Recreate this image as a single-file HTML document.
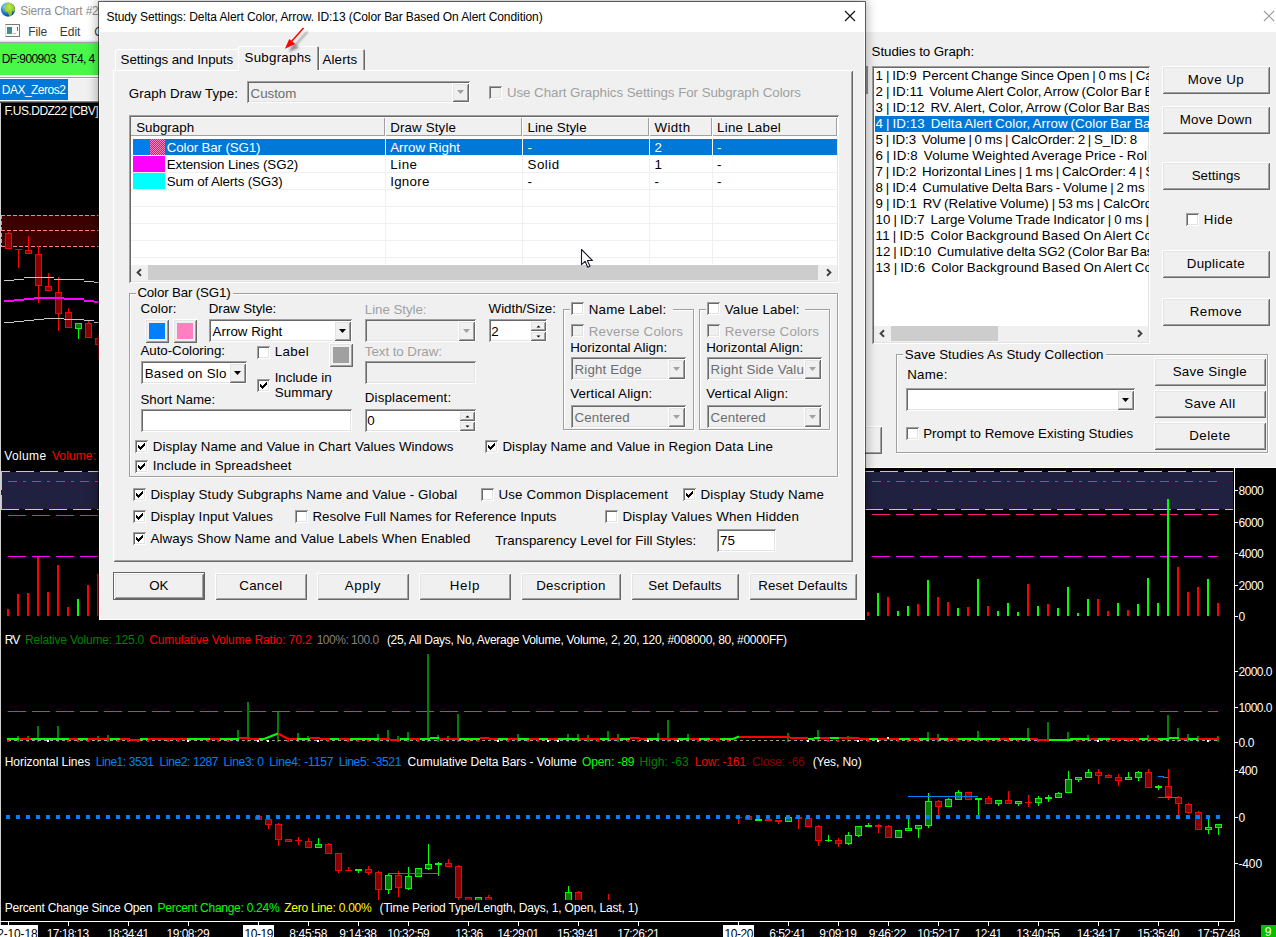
<!DOCTYPE html><html><head><meta charset="utf-8"><title>Study Settings</title><style>
html,body{margin:0;padding:0}
body{width:1276px;height:937px;overflow:hidden;position:relative;background:#000;font-family:"Liberation Sans",sans-serif}
div,span.t,svg.a{position:absolute;box-sizing:border-box}
span.t{white-space:pre;display:block}
svg{display:block}

</style></head><body>
<div style="left:0px;top:0px;width:1276px;height:43px;background:#fff;"></div>
<svg class="a" style="left:0;top:1px" width="17" height="18" viewBox="0 0 17 18"><defs><radialGradient id="gl" cx="0.35" cy="0.3" r="0.75"><stop offset="0" stop-color="#9fe0ff"/><stop offset="0.45" stop-color="#2f8fe0"/><stop offset="1" stop-color="#0a3f8f"/></radialGradient><radialGradient id="gg" cx="0.45" cy="0.3" r="0.8"><stop offset="0" stop-color="#c4e84a"/><stop offset="0.7" stop-color="#86c020"/><stop offset="1" stop-color="#5a9a18"/></radialGradient><clipPath id="gc"><circle cx="8" cy="8.6" r="7"/></clipPath></defs><circle cx="8" cy="8.6" r="7.1" fill="url(#gl)"/><g clip-path="url(#gc)"><path d="M5.5 3.2C7 1.6 10.5 1.2 13 3 15.5 5 16 8 14.5 10.2 13.6 11 12.8 10 11.8 10.6 12.6 12.4 11.4 14.8 9.6 15.6 8.6 14.6 8.8 12.8 8 11.6 6.6 11.4 4.6 10.6 4.2 8.8 4 7.2 5.6 6.6 5.2 5.2 5 4.4 5.2 3.8 5.5 3.2z" fill="url(#gg)"/></g></svg>
<span class="t" style="left:20.2px;top:1px;font-size:12px;line-height:20px;color:#8e8e8e;letter-spacing:-0.198px;">Sierra Chart #2</span>
<div style="left:5px;top:24px;width:15px;height:13px;background:#fafafa;border:1px solid #7a7a7a;border-left-color:#ddd;border-radius:1px;"></div>
<div style="left:7px;top:27px;width:5px;height:7px;background:linear-gradient(#3a7fb5,#3fa06a);"></div>
<div style="left:17px;top:27px;width:1px;height:4px;background:linear-gradient(#2a60c0,#40b040);"></div>
<div style="left:13px;top:33px;width:3px;height:1px;background:#bbb;"></div>
<span class="t" style="left:28.2px;top:22px;font-size:12px;line-height:20px;color:#3c3c3c;letter-spacing:-0.109px;">File</span>
<span class="t" style="left:59.8px;top:22px;font-size:12px;line-height:20px;color:#3c3c3c;letter-spacing:-0.020px;">Edit</span>
<span class="t" style="left:94.2px;top:22px;font-size:12px;line-height:20px;color:#3c3c3c;">C</span>
<div style="left:0px;top:40px;width:1276px;height:1px;background:#f4f4f4;"></div>
<div style="left:0px;top:41px;width:1276px;height:1px;background:#e0e0e0;"></div>
<div style="left:0px;top:42px;width:1276px;height:1px;background:#a8a0a8;"></div>
<div style="left:0px;top:43px;width:1276px;height:32px;background:#4af84a;"></div>
<span class="t" style="left:1.8px;top:49px;font-size:12px;line-height:20px;color:#000;letter-spacing:-0.589px;">DF:900903  ST:4, 4</span>
<div style="left:0px;top:75px;width:1276px;height:2px;background:#fff;"></div>
<div style="left:0px;top:77px;width:1276px;height:1px;background:#a0a0a0;"></div>
<div style="left:0px;top:78px;width:1276px;height:1px;background:#fff;"></div>
<div style="left:0px;top:79px;width:1276px;height:22px;background:#f0f0f0;"></div>
<div style="left:0px;top:79px;width:68px;height:21px;background:#0078d7;"></div>
<span class="t" style="left:1.8px;top:80px;font-size:12px;line-height:20px;color:#fff;letter-spacing:-0.520px;">DAX_Zeros2</span>
<div style="left:0px;top:100px;width:1276px;height:1px;background:#fff;"></div>
<div style="left:0px;top:101px;width:1276px;height:1px;background:#8a8a8a;"></div>
<div style="left:0px;top:102px;width:1276px;height:1px;background:#3c3c3c;"></div>
<div style="left:0px;top:103px;width:1px;height:834px;background:#d0d0d0;"></div>
<svg class="a" style="left:0;top:0" width="1276" height="937" viewBox="0 0 1276 937" shape-rendering="crispEdges"><rect x="1" y="215" width="98" height="31" fill="#3d0000"/><path d="M1 215.5H99" stroke="#ff8080" stroke-width="1" stroke-dasharray="4 2"/><path d="M1 230.5H99" stroke="#ff8080" stroke-width="1" stroke-dasharray="4 2"/><path d="M1 246.5H99" stroke="#ff8080" stroke-width="1" stroke-dasharray="4 2"/><path d="M1.5 215V247" stroke="#ff8080" stroke-width="1" stroke-dasharray="4 2"/><path d="M8.5 232.0V249.0" stroke="#ff0000" stroke-width="1"/><rect x="5.5" y="233.5" width="6" height="15" fill="#8b0000" stroke="#ff0000" stroke-width="1"/><path d="M18.5 249V268" stroke="#ff0000" stroke-width="1"/><path d="M15 249.5H22" stroke="#ff0000" stroke-width="1"/><path d="M28.5 236.0V254.0" stroke="#ff0000" stroke-width="1"/><rect x="25.5" y="250.5" width="6" height="3" fill="#8b0000" stroke="#ff0000" stroke-width="1"/><path d="M38.5 246.0V303.0" stroke="#ff0000" stroke-width="1"/><rect x="35.5" y="254.5" width="6" height="31" fill="#8b0000" stroke="#ff0000" stroke-width="1"/><path d="M48.5 273.0V291.0" stroke="#ff0000" stroke-width="1"/><rect x="45.5" y="286.5" width="6" height="4" fill="#8b0000" stroke="#ff0000" stroke-width="1"/><path d="M58.5 277.0V331.0" stroke="#ff0000" stroke-width="1"/><rect x="55.5" y="292.5" width="6" height="21" fill="#8b0000" stroke="#ff0000" stroke-width="1"/><path d="M68.5 308.0V328.0" stroke="#ff0000" stroke-width="1"/><rect x="65.5" y="312.5" width="6" height="15" fill="#8b0000" stroke="#ff0000" stroke-width="1"/><path d="M78.5 323.0V339.0" stroke="#00ff00" stroke-width="1"/><rect x="75.5" y="323.5" width="6" height="5" fill="#008000" stroke="#00ff00" stroke-width="1"/><path d="M88.5 321.0V338.0" stroke="#ff0000" stroke-width="1"/><rect x="85.5" y="323.5" width="6" height="14" fill="#8b0000" stroke="#ff0000" stroke-width="1"/><path d="M98.5 335.0V360.0" stroke="#ff0000" stroke-width="1"/><rect x="95.5" y="338.5" width="6" height="6" fill="#8b0000" stroke="#ff0000" stroke-width="1"/><path d="M4 280.5H14M14 279.5H24M24 277.5H54M54 279.5H84M84 281.5H94M94 282.5H99" stroke="#c8c8c8" stroke-width="1" fill="none"/><path d="M4 322.5H14M14 321.5H24M24 320.5H34M34 319.5H44M44 318.5H64M64 319.5H84M84 320.5H94M94 322.5H99" stroke="#c8c8c8" stroke-width="1" fill="none"/><path d="M4 301H14M14 300H24M24 299H34M34 298.3H64M64 299.3H84M84 300.5H94M94 302H99" stroke="#ff00ff" stroke-width="2" fill="none"/><rect x="1" y="472" width="1232" height="37" fill="#202040"/><path d="M-8 471.5H1233" stroke="#e0e000" stroke-width="1" stroke-dasharray="18 6"/><path d="M1 509.5H1233" stroke="#e0e000" stroke-width="1" stroke-dasharray="18 6"/><path d="M1.5 471V490M1.5 495V510" stroke="#e0e000" stroke-width="1"/><path d="M8 481.5H1217" stroke="#ff1493" stroke-width="1" stroke-dasharray="9 6 3 6"/><path d="M8 515.5H600" stroke="#ff1493" stroke-width="1" stroke-dasharray="18 6"/><path d="M608 514.5H1218" stroke="#ff1493" stroke-width="1" stroke-dasharray="18 6"/><path d="M8 556.5H1218" stroke="#ff00ff" stroke-width="1" stroke-dasharray="18 6"/><rect x="7" y="609" width="2" height="7" fill="#ff0000"/><rect x="17" y="594" width="2" height="22" fill="#ff0000"/><rect x="27" y="593" width="2" height="23" fill="#ff0000"/><rect x="37" y="557" width="2" height="59" fill="#ff0000"/><rect x="47" y="592" width="2" height="24" fill="#ff0000"/><rect x="57" y="565" width="2" height="51" fill="#ff0000"/><rect x="67" y="607" width="2" height="9" fill="#ff0000"/><rect x="77" y="599" width="2" height="17" fill="#00ff00"/><rect x="87" y="585" width="2" height="31" fill="#ff0000"/><rect x="97" y="574" width="2" height="42" fill="#ff0000"/><rect x="867" y="612" width="2" height="4" fill="#ff0000"/><rect x="877" y="593" width="2" height="23" fill="#00ff00"/><rect x="887" y="597" width="2" height="19" fill="#ff0000"/><rect x="897" y="611" width="2" height="5" fill="#00ff00"/><rect x="907" y="606" width="2" height="10" fill="#00ff00"/><rect x="917" y="604" width="2" height="12" fill="#ff0000"/><rect x="927" y="580" width="2" height="36" fill="#00ff00"/><rect x="937" y="597" width="2" height="19" fill="#ff0000"/><rect x="947" y="602" width="2" height="14" fill="#ff0000"/><rect x="957" y="608" width="2" height="8" fill="#00ff00"/><rect x="967" y="607" width="2" height="9" fill="#ff0000"/><rect x="977" y="579" width="2" height="37" fill="#00ff00"/><rect x="987" y="606" width="2" height="10" fill="#ff0000"/><rect x="997" y="611" width="2" height="5" fill="#00ff00"/><rect x="1007" y="603" width="2" height="13" fill="#00ff00"/><rect x="1017" y="612" width="2" height="4" fill="#00ff00"/><rect x="1027" y="584" width="2" height="32" fill="#ff0000"/><rect x="1037" y="606" width="2" height="10" fill="#00ff00"/><rect x="1047" y="604" width="2" height="12" fill="#ff0000"/><rect x="1057" y="608" width="2" height="8" fill="#00ff00"/><rect x="1067" y="587" width="2" height="29" fill="#00ff00"/><rect x="1077" y="613" width="2" height="3" fill="#00ff00"/><rect x="1087" y="599" width="2" height="17" fill="#00ff00"/><rect x="1097" y="599" width="2" height="17" fill="#ff0000"/><rect x="1107" y="611" width="2" height="5" fill="#ff0000"/><rect x="1117" y="603" width="2" height="13" fill="#00ff00"/><rect x="1127" y="610" width="2" height="6" fill="#ff0000"/><rect x="1137" y="604" width="2" height="12" fill="#00ff00"/><rect x="1147" y="578" width="2" height="38" fill="#00ff00"/><rect x="1157" y="603" width="2" height="13" fill="#00ff00"/><rect x="1167" y="499" width="2" height="117" fill="#00ff00"/><rect x="1177" y="567" width="2" height="49" fill="#ff0000"/><rect x="1187" y="592" width="2" height="24" fill="#ff0000"/><rect x="1197" y="587" width="2" height="29" fill="#ff0000"/><rect x="1207" y="579" width="2" height="37" fill="#00ff00"/><rect x="1217" y="603" width="2" height="13" fill="#ff0000"/><path d="M8 711.5H1218" stroke="#ff00ff" stroke-width="1" stroke-dasharray="18 6"/><rect x="17" y="736" width="2" height="6" fill="#008000"/><rect x="27" y="736" width="2" height="6" fill="#008000"/><rect x="37" y="726" width="2" height="16" fill="#008000"/><rect x="57" y="726" width="2" height="16" fill="#008000"/><rect x="97" y="736" width="2" height="6" fill="#008000"/><rect x="107" y="735" width="2" height="7" fill="#008000"/><rect x="237" y="730" width="2" height="12" fill="#008000"/><rect x="247" y="702" width="2" height="40" fill="#008000"/><rect x="277" y="712" width="2" height="30" fill="#008000"/><rect x="297" y="733" width="2" height="9" fill="#008000"/><rect x="307" y="736" width="2" height="6" fill="#008000"/><rect x="377" y="734" width="2" height="8" fill="#008000"/><rect x="387" y="730" width="2" height="12" fill="#008000"/><rect x="397" y="736" width="2" height="6" fill="#008000"/><rect x="407" y="732" width="2" height="10" fill="#008000"/><rect x="427" y="654" width="2" height="88" fill="#008000"/><rect x="437" y="735" width="2" height="7" fill="#008000"/><rect x="447" y="736" width="2" height="6" fill="#008000"/><rect x="457" y="714" width="2" height="28" fill="#008000"/><rect x="517" y="734" width="2" height="8" fill="#008000"/><rect x="567" y="734" width="2" height="8" fill="#008000"/><rect x="577" y="734" width="2" height="8" fill="#008000"/><rect x="587" y="735" width="2" height="7" fill="#008000"/><rect x="607" y="731" width="2" height="11" fill="#008000"/><rect x="617" y="734" width="2" height="8" fill="#008000"/><rect x="657" y="733" width="2" height="9" fill="#008000"/><rect x="667" y="720" width="2" height="22" fill="#008000"/><rect x="687" y="734" width="2" height="8" fill="#008000"/><rect x="787" y="733" width="2" height="9" fill="#008000"/><rect x="817" y="730" width="2" height="12" fill="#008000"/><rect x="847" y="736" width="2" height="6" fill="#008000"/><rect x="927" y="732" width="2" height="10" fill="#008000"/><rect x="937" y="734" width="2" height="8" fill="#008000"/><rect x="977" y="731" width="2" height="11" fill="#008000"/><rect x="1027" y="728" width="2" height="14" fill="#008000"/><rect x="1047" y="722" width="2" height="20" fill="#008000"/><rect x="1067" y="732" width="2" height="10" fill="#008000"/><rect x="1087" y="735" width="2" height="7" fill="#008000"/><rect x="1147" y="735" width="2" height="7" fill="#008000"/><rect x="1167" y="715" width="2" height="27" fill="#008000"/><rect x="1177" y="728" width="2" height="14" fill="#008000"/><rect x="1187" y="734" width="2" height="8" fill="#008000"/><rect x="1197" y="736" width="2" height="6" fill="#008000"/><rect x="1217" y="736" width="2" height="6" fill="#008000"/><path d="M8 740.5H1219" stroke="#a0a0a0" stroke-width="1" stroke-dasharray="3 3"/><rect x="7" y="738" width="12" height="2" fill="#00ff00"/><rect x="19" y="738" width="12" height="2" fill="#ff0000"/><rect x="31" y="738" width="38" height="2" fill="#00ff00"/><rect x="69" y="738" width="9" height="2" fill="#ff0000"/><rect x="78" y="738" width="10" height="2" fill="#00ff00"/><rect x="88" y="738" width="22" height="2" fill="#ff0000"/><rect x="110" y="738" width="10" height="2" fill="#00ff00"/><rect x="120" y="738" width="10" height="2" fill="#ff0000"/><rect x="130" y="739" width="10" height="2" fill="#ff0000"/><rect x="140" y="738" width="8" height="2" fill="#00ff00"/><rect x="148" y="738" width="39" height="2" fill="#ff0000"/><rect x="187" y="738" width="23" height="2" fill="#00ff00"/><rect x="210" y="738" width="10" height="2" fill="#ff0000"/><rect x="220" y="738" width="19" height="2" fill="#00ff00"/><rect x="239" y="737" width="11" height="2" fill="#ff0000"/><rect x="250" y="738" width="9" height="2" fill="#ff0000"/><rect x="259" y="738" width="5" height="2" fill="#00ff00"/><rect x="288" y="738" width="9" height="2" fill="#ff0000"/><rect x="297" y="738" width="13" height="2" fill="#00ff00"/><rect x="310" y="737" width="10" height="2" fill="#ff0000"/><rect x="320" y="738" width="10" height="2" fill="#ff0000"/><rect x="330" y="738" width="9" height="2" fill="#00ff00"/><rect x="339" y="738" width="11" height="2" fill="#ff0000"/><rect x="350" y="738" width="29" height="2" fill="#00ff00"/><rect x="379" y="738" width="11" height="2" fill="#ff0000"/><rect x="390" y="739" width="10" height="2" fill="#ff0000"/><rect x="400" y="738" width="9" height="2" fill="#00ff00"/><rect x="409" y="738" width="11" height="2" fill="#ff0000"/><rect x="420" y="738" width="10" height="2" fill="#00ff00"/><rect x="430" y="737" width="9" height="2" fill="#00ff00"/><rect x="439" y="738" width="20" height="2" fill="#ff0000"/><rect x="459" y="738" width="21" height="2" fill="#00ff00"/><rect x="480" y="737" width="9" height="2" fill="#ff0000"/><rect x="489" y="738" width="9" height="2" fill="#ff0000"/><rect x="498" y="738" width="10" height="2" fill="#00ff00"/><rect x="508" y="738" width="10" height="2" fill="#ff0000"/><rect x="518" y="738" width="11" height="2" fill="#00ff00"/><rect x="529" y="738" width="10" height="2" fill="#ff0000"/><rect x="539" y="738" width="9" height="2" fill="#00ff00"/><rect x="548" y="738" width="10" height="2" fill="#ff0000"/><rect x="558" y="738" width="21" height="2" fill="#00ff00"/><rect x="579" y="738" width="21" height="2" fill="#ff0000"/><rect x="600" y="738" width="9" height="2" fill="#00ff00"/><rect x="609" y="738" width="11" height="2" fill="#ff0000"/><rect x="620" y="738" width="10" height="2" fill="#00ff00"/><rect x="630" y="737" width="9" height="2" fill="#ff0000"/><rect x="639" y="738" width="8" height="2" fill="#ff0000"/><rect x="647" y="738" width="12" height="2" fill="#00ff00"/><rect x="659" y="738" width="19" height="2" fill="#ff0000"/><rect x="678" y="738" width="11" height="2" fill="#00ff00"/><rect x="689" y="738" width="10" height="2" fill="#ff0000"/><rect x="699" y="738" width="11" height="2" fill="#00ff00"/><rect x="710" y="738" width="10" height="2" fill="#ff0000"/><rect x="720" y="738" width="13" height="2" fill="#00ff00"/><rect x="739" y="736" width="51" height="2" fill="#ff0000"/><rect x="790" y="737" width="18" height="2" fill="#ff0000"/><rect x="808" y="738" width="6" height="2" fill="#00ff00"/><rect x="814" y="737" width="6" height="2" fill="#00ff00"/><rect x="820" y="737" width="10" height="2" fill="#ff0000"/><rect x="830" y="737" width="9" height="2" fill="#00ff00"/><rect x="839" y="737" width="20" height="2" fill="#ff0000"/><rect x="859" y="738" width="10" height="2" fill="#ff0000"/><rect x="869" y="738" width="9" height="2" fill="#00ff00"/><rect x="878" y="738" width="21" height="2" fill="#ff0000"/><rect x="899" y="738" width="11" height="2" fill="#00ff00"/><rect x="910" y="738" width="9" height="2" fill="#ff0000"/><rect x="919" y="738" width="10" height="2" fill="#00ff00"/><rect x="929" y="738" width="10" height="2" fill="#ff0000"/><rect x="939" y="738" width="9" height="2" fill="#00ff00"/><rect x="948" y="738" width="10" height="2" fill="#ff0000"/><rect x="958" y="738" width="42" height="2" fill="#00ff00"/><rect x="1000" y="738" width="9" height="2" fill="#ff0000"/><rect x="1009" y="738" width="21" height="2" fill="#00ff00"/><rect x="1030" y="738" width="8" height="2" fill="#ff0000"/><rect x="1038" y="739" width="11" height="2" fill="#ff0000"/><rect x="1049" y="739" width="21" height="2" fill="#00ff00"/><rect x="1070" y="738" width="19" height="2" fill="#00ff00"/><rect x="1089" y="738" width="9" height="2" fill="#ff0000"/><rect x="1098" y="738" width="12" height="2" fill="#00ff00"/><rect x="1110" y="738" width="29" height="2" fill="#ff0000"/><rect x="1139" y="738" width="9" height="2" fill="#00ff00"/><rect x="1148" y="738" width="10" height="2" fill="#ff0000"/><rect x="1158" y="738" width="11" height="2" fill="#00ff00"/><rect x="1169" y="737" width="10" height="2" fill="#00ff00"/><rect x="1179" y="738" width="9" height="2" fill="#ff0000"/><rect x="1188" y="738" width="10" height="2" fill="#00ff00"/><rect x="1198" y="738" width="21" height="2" fill="#ff0000"/><path d="M264 739L278 733.5" stroke="#00ff00" stroke-width="2" fill="none" shape-rendering="auto"/><path d="M278 733.5L288 739" stroke="#ff0000" stroke-width="2" fill="none" shape-rendering="auto"/><path d="M733 739L739 736.5" stroke="#00ff00" stroke-width="2" fill="none" shape-rendering="auto"/><rect x="7" y="740" width="2" height="2" fill="#ff0000"/><rect x="47" y="740" width="2" height="2" fill="#fff"/><rect x="67" y="740" width="2" height="2" fill="#ff0000"/><rect x="77" y="740" width="2" height="2" fill="#ff0000"/><rect x="87" y="740" width="2" height="2" fill="#ff0000"/><rect x="117" y="740" width="2" height="2" fill="#ff0000"/><rect x="127" y="740" width="2" height="2" fill="#ff0000"/><rect x="137" y="740" width="2" height="2" fill="#ff0000"/><rect x="147" y="740" width="2" height="2" fill="#ff0000"/><rect x="167" y="740" width="2" height="2" fill="#ff0000"/><rect x="177" y="740" width="2" height="2" fill="#ff0000"/><rect x="187" y="740" width="2" height="2" fill="#fff"/><rect x="207" y="740" width="2" height="2" fill="#ff0000"/><rect x="217" y="740" width="2" height="2" fill="#ff0000"/><rect x="227" y="740" width="2" height="2" fill="#ff0000"/><rect x="257" y="740" width="2" height="2" fill="#fff"/><rect x="267" y="740" width="2" height="2" fill="#fff"/><rect x="287" y="740" width="2" height="2" fill="#ff0000"/><rect x="317" y="740" width="2" height="2" fill="#fff"/><rect x="327" y="740" width="2" height="2" fill="#ff0000"/><rect x="347" y="740" width="2" height="2" fill="#ff0000"/><rect x="357" y="740" width="2" height="2" fill="#ff0000"/><rect x="367" y="740" width="2" height="2" fill="#ff0000"/><rect x="417" y="740" width="2" height="2" fill="#ff0000"/><rect x="467" y="740" width="2" height="2" fill="#ff0000"/><rect x="477" y="740" width="2" height="2" fill="#ff0000"/><rect x="497" y="740" width="2" height="2" fill="#fff"/><rect x="507" y="740" width="2" height="2" fill="#ff0000"/><rect x="527" y="740" width="2" height="2" fill="#ff0000"/><rect x="537" y="740" width="2" height="2" fill="#ff0000"/><rect x="547" y="740" width="2" height="2" fill="#fff"/><rect x="557" y="740" width="2" height="2" fill="#fff"/><rect x="597" y="740" width="2" height="2" fill="#ff0000"/><rect x="627" y="740" width="2" height="2" fill="#ff0000"/><rect x="637" y="740" width="2" height="2" fill="#ff0000"/><rect x="647" y="740" width="2" height="2" fill="#fff"/><rect x="677" y="740" width="2" height="2" fill="#fff"/><rect x="697" y="740" width="2" height="2" fill="#ff0000"/><rect x="707" y="740" width="2" height="2" fill="#ff0000"/><rect x="717" y="740" width="2" height="2" fill="#ff0000"/><rect x="727" y="740" width="2" height="2" fill="#ff0000"/><rect x="807" y="740" width="2" height="2" fill="#fff"/><rect x="827" y="740" width="2" height="2" fill="#ff0000"/><rect x="837" y="740" width="2" height="2" fill="#ff0000"/><rect x="857" y="740" width="2" height="2" fill="#fff"/><rect x="867" y="740" width="2" height="2" fill="#ff0000"/><rect x="877" y="740" width="2" height="2" fill="#fff"/><rect x="887" y="737" width="2" height="2" fill="#fff"/><rect x="897" y="740" width="2" height="2" fill="#ff0000"/><rect x="907" y="740" width="2" height="2" fill="#ff0000"/><rect x="917" y="740" width="2" height="2" fill="#ff0000"/><rect x="947" y="740" width="2" height="2" fill="#ff0000"/><rect x="957" y="740" width="2" height="2" fill="#ff0000"/><rect x="967" y="740" width="2" height="2" fill="#ff0000"/><rect x="987" y="740" width="2" height="2" fill="#ff0000"/><rect x="997" y="740" width="2" height="2" fill="#ff0000"/><rect x="1007" y="740" width="2" height="2" fill="#ff0000"/><rect x="1017" y="740" width="2" height="2" fill="#ff0000"/><rect x="1037" y="740" width="2" height="2" fill="#ff0000"/><rect x="1077" y="740" width="2" height="2" fill="#ff0000"/><rect x="1097" y="740" width="2" height="2" fill="#fff"/><rect x="1107" y="740" width="2" height="2" fill="#ff0000"/><rect x="1117" y="740" width="2" height="2" fill="#ff0000"/><rect x="1127" y="740" width="2" height="2" fill="#ff0000"/><rect x="1137" y="740" width="2" height="2" fill="#ff0000"/><rect x="1157" y="740" width="2" height="2" fill="#ff0000"/><rect x="1207" y="740" width="2" height="2" fill="#fff"/><path d="M258.5 815.7V820.0" stroke="#ff0000" stroke-width="1"/><rect x="255.5" y="816.5" width="6" height="3" fill="#8b0000" stroke="#ff0000" stroke-width="1"/><path d="M268.5 819.0V829.0" stroke="#ff0000" stroke-width="1"/><rect x="265.5" y="819.5" width="6" height="5" fill="#8b0000" stroke="#ff0000" stroke-width="1"/><path d="M278.5 822.7V845.8" stroke="#ff0000" stroke-width="1"/><rect x="275.5" y="824.5" width="6" height="15" fill="#8b0000" stroke="#ff0000" stroke-width="1"/><path d="M288.5 839.0V842.0" stroke="#ff0000" stroke-width="1"/><rect x="285.5" y="839.5" width="6" height="2" fill="#8b0000" stroke="#ff0000" stroke-width="1"/><path d="M298.5 837.0V844.8" stroke="#ff0000" stroke-width="1"/><rect x="295" y="840" width="7" height="1" fill="#ff0000"/><path d="M308.5 837.7V847.0" stroke="#ff0000" stroke-width="1"/><rect x="305.5" y="841.5" width="6" height="6" fill="#8b0000" stroke="#ff0000" stroke-width="1"/><path d="M318.5 837.7V847.7" stroke="#00ff00" stroke-width="1"/><rect x="315.5" y="844.5" width="6" height="3" fill="#008000" stroke="#00ff00" stroke-width="1"/><path d="M328.5 842.7V854.3" stroke="#ff0000" stroke-width="1"/><rect x="325.5" y="844.5" width="6" height="9" fill="#8b0000" stroke="#ff0000" stroke-width="1"/><path d="M338.5 852.7V872.8" stroke="#ff0000" stroke-width="1"/><rect x="335.5" y="853.5" width="6" height="17" fill="#8b0000" stroke="#ff0000" stroke-width="1"/><path d="M348.5 866.5V871.0" stroke="#ff0000" stroke-width="1"/><rect x="345" y="870" width="7" height="1" fill="#ff0000"/><path d="M358.5 869.0V872.8" stroke="#00ff00" stroke-width="1"/><rect x="355.5" y="869.5" width="6" height="1" fill="#008000" stroke="#00ff00" stroke-width="1"/><path d="M368.5 865.8V874.6" stroke="#ff0000" stroke-width="1"/><rect x="365.5" y="869.5" width="6" height="3" fill="#8b0000" stroke="#ff0000" stroke-width="1"/><path d="M378.5 870.8V900.0" stroke="#ff0000" stroke-width="1"/><rect x="375.5" y="872.5" width="6" height="17" fill="#8b0000" stroke="#ff0000" stroke-width="1"/><path d="M388.5 872.8V894.0" stroke="#00ff00" stroke-width="1"/><rect x="385.5" y="875.5" width="6" height="14" fill="#008000" stroke="#00ff00" stroke-width="1"/><path d="M398.5 870.8V896.6" stroke="#ff0000" stroke-width="1"/><rect x="395.5" y="875.5" width="6" height="12" fill="#8b0000" stroke="#ff0000" stroke-width="1"/><path d="M408.5 866.6V890.0" stroke="#00ff00" stroke-width="1"/><rect x="405.5" y="876.5" width="6" height="12" fill="#008000" stroke="#00ff00" stroke-width="1"/><path d="M418.5 868.0V877.0" stroke="#00ff00" stroke-width="1"/><rect x="415.5" y="868.5" width="6" height="8" fill="#008000" stroke="#00ff00" stroke-width="1"/><path d="M428.5 844.0V870.0" stroke="#00ff00" stroke-width="1"/><rect x="425.5" y="864.5" width="6" height="4" fill="#008000" stroke="#00ff00" stroke-width="1"/><path d="M438.5 862.0V876.0" stroke="#00ff00" stroke-width="1"/><rect x="435" y="863" width="7" height="2" fill="#00ff00"/><path d="M448.5 859.0V867.3" stroke="#ff0000" stroke-width="1"/><rect x="445.5" y="863.5" width="6" height="3" fill="#8b0000" stroke="#ff0000" stroke-width="1"/><path d="M458.5 864.8V900.0" stroke="#ff0000" stroke-width="1"/><rect x="455.5" y="866.5" width="6" height="31" fill="#8b0000" stroke="#ff0000" stroke-width="1"/><path d="M468.5 896.5V903.0" stroke="#ff0000" stroke-width="1"/><rect x="465.5" y="897.5" width="6" height="5" fill="#8b0000" stroke="#ff0000" stroke-width="1"/><path d="M478.5 896.5V903.0" stroke="#00ff00" stroke-width="1"/><rect x="475.5" y="897.5" width="6" height="5" fill="#008000" stroke="#00ff00" stroke-width="1"/><path d="M488.5 895.0V903.0" stroke="#ff0000" stroke-width="1"/><rect x="485.5" y="897.5" width="6" height="5" fill="#8b0000" stroke="#ff0000" stroke-width="1"/><path d="M568.5 886.0V903.0" stroke="#00ff00" stroke-width="1"/><rect x="565.5" y="892.5" width="6" height="10" fill="#008000" stroke="#00ff00" stroke-width="1"/><path d="M578.5 891.0V903.0" stroke="#ff0000" stroke-width="1"/><rect x="575.5" y="892.5" width="6" height="10" fill="#8b0000" stroke="#ff0000" stroke-width="1"/><path d="M608.5 894V900" stroke="#ff0000" stroke-width="1"/><path d="M388 873.5H438" stroke="#0080ff" stroke-width="1"/><path d="M738.5 816.4V824.0" stroke="#ff0000" stroke-width="1"/><rect x="735" y="817" width="7" height="1" fill="#ff0000"/><path d="M748.5 816.4V820.2" stroke="#ff0000" stroke-width="1"/><rect x="745.5" y="816.5" width="6" height="3" fill="#8b0000" stroke="#ff0000" stroke-width="1"/><path d="M758.5 819.0V821.0" stroke="#00ff00" stroke-width="1"/><rect x="755" y="819" width="7" height="2" fill="#00ff00"/><path d="M768.5 819.0V821.0" stroke="#ff0000" stroke-width="1"/><rect x="765" y="819" width="7" height="2" fill="#ff0000"/><path d="M778.5 820.0V824.0" stroke="#ff0000" stroke-width="1"/><rect x="775" y="820" width="7" height="2" fill="#ff0000"/><path d="M788.5 817.2V821.5" stroke="#00ff00" stroke-width="1"/><rect x="785.5" y="817.5" width="6" height="4" fill="#008000" stroke="#00ff00" stroke-width="1"/><path d="M798.5 816.4V829.0" stroke="#ff0000" stroke-width="1"/><rect x="795" y="817" width="7" height="2" fill="#ff0000"/><path d="M808.5 818.2V826.8" stroke="#ff0000" stroke-width="1"/><rect x="805.5" y="818.5" width="6" height="8" fill="#8b0000" stroke="#ff0000" stroke-width="1"/><path d="M818.5 825.0V845.8" stroke="#ff0000" stroke-width="1"/><rect x="815.5" y="826.5" width="6" height="14" fill="#8b0000" stroke="#ff0000" stroke-width="1"/><path d="M828.5 835.2V841.5" stroke="#00ff00" stroke-width="1"/><rect x="825" y="840" width="7" height="1" fill="#00ff00"/><path d="M838.5 837.7V846.5" stroke="#ff0000" stroke-width="1"/><rect x="835.5" y="840.5" width="6" height="3" fill="#8b0000" stroke="#ff0000" stroke-width="1"/><path d="M848.5 832.2V844.7" stroke="#00ff00" stroke-width="1"/><rect x="845.5" y="835.5" width="6" height="8" fill="#008000" stroke="#00ff00" stroke-width="1"/><path d="M858.5 826.5V837.0" stroke="#00ff00" stroke-width="1"/><rect x="855.5" y="826.5" width="6" height="9" fill="#008000" stroke="#00ff00" stroke-width="1"/><path d="M868.5 822.7V827.0" stroke="#00ff00" stroke-width="1"/><rect x="865" y="825" width="7" height="2" fill="#00ff00"/><path d="M878.5 824.0V832.7" stroke="#ff0000" stroke-width="1"/><rect x="875" y="825" width="7" height="2" fill="#ff0000"/><path d="M888.5 824.7V838.2" stroke="#ff0000" stroke-width="1"/><rect x="885.5" y="826.5" width="6" height="11" fill="#8b0000" stroke="#ff0000" stroke-width="1"/><path d="M898.5 829.7V838.2" stroke="#00ff00" stroke-width="1"/><rect x="895.5" y="830.5" width="6" height="7" fill="#008000" stroke="#00ff00" stroke-width="1"/><path d="M908.5 819.0V831.0" stroke="#00ff00" stroke-width="1"/><rect x="905.5" y="828.5" width="6" height="2" fill="#008000" stroke="#00ff00" stroke-width="1"/><path d="M918.5 824.7V837.7" stroke="#00ff00" stroke-width="1"/><rect x="915.5" y="825.5" width="6" height="3" fill="#008000" stroke="#00ff00" stroke-width="1"/><path d="M928.5 793.0V827.7" stroke="#00ff00" stroke-width="1"/><rect x="925.5" y="801.5" width="6" height="24" fill="#008000" stroke="#00ff00" stroke-width="1"/><path d="M938.5 800.0V814.7" stroke="#ff0000" stroke-width="1"/><rect x="935.5" y="801.5" width="6" height="5" fill="#8b0000" stroke="#ff0000" stroke-width="1"/><path d="M948.5 797.6V807.0" stroke="#00ff00" stroke-width="1"/><rect x="945.5" y="799.5" width="6" height="7" fill="#008000" stroke="#00ff00" stroke-width="1"/><path d="M958.5 790.0V800.0" stroke="#00ff00" stroke-width="1"/><rect x="955.5" y="792.5" width="6" height="7" fill="#008000" stroke="#00ff00" stroke-width="1"/><path d="M968.5 792.0V800.0" stroke="#ff0000" stroke-width="1"/><rect x="965.5" y="792.5" width="6" height="7" fill="#8b0000" stroke="#ff0000" stroke-width="1"/><path d="M978.5 798.0V817.0" stroke="#00ff00" stroke-width="1"/><rect x="975" y="798" width="7" height="2" fill="#00ff00"/><path d="M988.5 795.9V804.0" stroke="#ff0000" stroke-width="1"/><rect x="985.5" y="798.5" width="6" height="5" fill="#8b0000" stroke="#ff0000" stroke-width="1"/><path d="M998.5 800.0V805.6" stroke="#00ff00" stroke-width="1"/><rect x="995.5" y="800.5" width="6" height="3" fill="#008000" stroke="#00ff00" stroke-width="1"/><path d="M1008.5 790.6V804.0" stroke="#ff0000" stroke-width="1"/><rect x="1005.5" y="800.5" width="6" height="3" fill="#8b0000" stroke="#ff0000" stroke-width="1"/><path d="M1018.5 801.0V805.6" stroke="#00ff00" stroke-width="1"/><rect x="1015.5" y="801.5" width="6" height="2" fill="#008000" stroke="#00ff00" stroke-width="1"/><path d="M1028.5 795.0V807.0" stroke="#ff0000" stroke-width="1"/><rect x="1025" y="802" width="7" height="1" fill="#ff0000"/><path d="M1038.5 796.4V805.6" stroke="#00ff00" stroke-width="1"/><rect x="1035.5" y="798.5" width="6" height="4" fill="#008000" stroke="#00ff00" stroke-width="1"/><path d="M1048.5 795.0V802.0" stroke="#00ff00" stroke-width="1"/><rect x="1045.5" y="797.5" width="6" height="1" fill="#008000" stroke="#00ff00" stroke-width="1"/><path d="M1058.5 792.0V797.6" stroke="#00ff00" stroke-width="1"/><rect x="1055.5" y="793.5" width="6" height="4" fill="#008000" stroke="#00ff00" stroke-width="1"/><path d="M1068.5 771.3V793.0" stroke="#00ff00" stroke-width="1"/><rect x="1065.5" y="779.5" width="6" height="13" fill="#008000" stroke="#00ff00" stroke-width="1"/><path d="M1078.5 777.0V781.8" stroke="#00ff00" stroke-width="1"/><rect x="1075.5" y="777.5" width="6" height="2" fill="#008000" stroke="#00ff00" stroke-width="1"/><path d="M1088.5 768.8V777.6" stroke="#00ff00" stroke-width="1"/><rect x="1085.5" y="772.5" width="6" height="5" fill="#008000" stroke="#00ff00" stroke-width="1"/><path d="M1098.5 768.8V783.8" stroke="#ff0000" stroke-width="1"/><rect x="1095.5" y="772.5" width="6" height="3" fill="#8b0000" stroke="#ff0000" stroke-width="1"/><path d="M1108.5 774.3V777.6" stroke="#ff0000" stroke-width="1"/><rect x="1105.5" y="775.5" width="6" height="2" fill="#8b0000" stroke="#ff0000" stroke-width="1"/><path d="M1118.5 774.3V785.8" stroke="#ff0000" stroke-width="1"/><rect x="1115.5" y="777.5" width="6" height="3" fill="#8b0000" stroke="#ff0000" stroke-width="1"/><path d="M1128.5 772.0V779.6" stroke="#00ff00" stroke-width="1"/><rect x="1125.5" y="777.5" width="6" height="2" fill="#008000" stroke="#00ff00" stroke-width="1"/><path d="M1138.5 771.3V780.8" stroke="#00ff00" stroke-width="1"/><rect x="1135.5" y="772.5" width="6" height="5" fill="#008000" stroke="#00ff00" stroke-width="1"/><path d="M1148.5 768.8V787.6" stroke="#ff0000" stroke-width="1"/><rect x="1145.5" y="772.5" width="6" height="15" fill="#8b0000" stroke="#ff0000" stroke-width="1"/><path d="M1158.5 785.0V789.6" stroke="#00ff00" stroke-width="1"/><rect x="1155.5" y="786.5" width="6" height="1" fill="#008000" stroke="#00ff00" stroke-width="1"/><path d="M1168.5 768.8V800.0" stroke="#ff0000" stroke-width="1"/><rect x="1165.5" y="786.5" width="6" height="10" fill="#8b0000" stroke="#ff0000" stroke-width="1"/><path d="M1178.5 796.4V815.7" stroke="#ff0000" stroke-width="1"/><rect x="1175.5" y="797.5" width="6" height="6" fill="#8b0000" stroke="#ff0000" stroke-width="1"/><path d="M1188.5 802.6V814.0" stroke="#ff0000" stroke-width="1"/><rect x="1185.5" y="804.5" width="6" height="8" fill="#8b0000" stroke="#ff0000" stroke-width="1"/><path d="M1198.5 811.0V829.7" stroke="#ff0000" stroke-width="1"/><rect x="1195.5" y="812.5" width="6" height="17" fill="#8b0000" stroke="#ff0000" stroke-width="1"/><path d="M1208.5 819.0V834.0" stroke="#00ff00" stroke-width="1"/><rect x="1205.5" y="827.5" width="6" height="2" fill="#008000" stroke="#00ff00" stroke-width="1"/><path d="M1218.5 824.0V834.7" stroke="#00ff00" stroke-width="1"/><rect x="1215.5" y="824.5" width="6" height="3" fill="#008000" stroke="#00ff00" stroke-width="1"/><path d="M908 796.5H978" stroke="#0080ff" stroke-width="1"/><path d="M1158 776.5H1163V777.5H1168" stroke="#0080ff" stroke-width="1" fill="none"/><path d="M1158 797.5H1178" stroke="#0080ff" stroke-width="1"/><rect x="1" y="900" width="1233" height="21" fill="#000"/><rect x="6" y="815" width="4" height="4" fill="#0080ff"/><rect x="16" y="815" width="4" height="4" fill="#0080ff"/><rect x="26" y="815" width="4" height="4" fill="#0080ff"/><rect x="36" y="815" width="4" height="4" fill="#0080ff"/><rect x="46" y="815" width="4" height="4" fill="#0080ff"/><rect x="56" y="815" width="4" height="4" fill="#0080ff"/><rect x="66" y="815" width="4" height="4" fill="#0080ff"/><rect x="76" y="815" width="4" height="4" fill="#0080ff"/><rect x="86" y="815" width="4" height="4" fill="#0080ff"/><rect x="96" y="815" width="4" height="4" fill="#0080ff"/><rect x="106" y="815" width="4" height="4" fill="#0080ff"/><rect x="116" y="815" width="4" height="4" fill="#0080ff"/><rect x="126" y="815" width="4" height="4" fill="#0080ff"/><rect x="136" y="815" width="4" height="4" fill="#0080ff"/><rect x="146" y="815" width="4" height="4" fill="#0080ff"/><rect x="156" y="815" width="4" height="4" fill="#0080ff"/><rect x="166" y="815" width="4" height="4" fill="#0080ff"/><rect x="176" y="815" width="4" height="4" fill="#0080ff"/><rect x="186" y="815" width="4" height="4" fill="#0080ff"/><rect x="196" y="815" width="4" height="4" fill="#0080ff"/><rect x="206" y="815" width="4" height="4" fill="#0080ff"/><rect x="216" y="815" width="4" height="4" fill="#0080ff"/><rect x="226" y="815" width="4" height="4" fill="#0080ff"/><rect x="236" y="815" width="4" height="4" fill="#0080ff"/><rect x="246" y="815" width="4" height="4" fill="#0080ff"/><rect x="256" y="815" width="4" height="4" fill="#0080ff"/><rect x="266" y="815" width="4" height="4" fill="#0080ff"/><rect x="276" y="815" width="4" height="4" fill="#0080ff"/><rect x="286" y="815" width="4" height="4" fill="#0080ff"/><rect x="296" y="815" width="4" height="4" fill="#0080ff"/><rect x="306" y="815" width="4" height="4" fill="#0080ff"/><rect x="316" y="815" width="4" height="4" fill="#0080ff"/><rect x="326" y="815" width="4" height="4" fill="#0080ff"/><rect x="336" y="815" width="4" height="4" fill="#0080ff"/><rect x="346" y="815" width="4" height="4" fill="#0080ff"/><rect x="356" y="815" width="4" height="4" fill="#0080ff"/><rect x="366" y="815" width="4" height="4" fill="#0080ff"/><rect x="376" y="815" width="4" height="4" fill="#0080ff"/><rect x="386" y="815" width="4" height="4" fill="#0080ff"/><rect x="396" y="815" width="4" height="4" fill="#0080ff"/><rect x="406" y="815" width="4" height="4" fill="#0080ff"/><rect x="416" y="815" width="4" height="4" fill="#0080ff"/><rect x="426" y="815" width="4" height="4" fill="#0080ff"/><rect x="436" y="815" width="4" height="4" fill="#0080ff"/><rect x="446" y="815" width="4" height="4" fill="#0080ff"/><rect x="456" y="815" width="4" height="4" fill="#0080ff"/><rect x="466" y="815" width="4" height="4" fill="#0080ff"/><rect x="476" y="815" width="4" height="4" fill="#0080ff"/><rect x="486" y="815" width="4" height="4" fill="#0080ff"/><rect x="496" y="815" width="4" height="4" fill="#0080ff"/><rect x="506" y="815" width="4" height="4" fill="#0080ff"/><rect x="516" y="815" width="4" height="4" fill="#0080ff"/><rect x="526" y="815" width="4" height="4" fill="#0080ff"/><rect x="536" y="815" width="4" height="4" fill="#0080ff"/><rect x="546" y="815" width="4" height="4" fill="#0080ff"/><rect x="556" y="815" width="4" height="4" fill="#0080ff"/><rect x="566" y="815" width="4" height="4" fill="#0080ff"/><rect x="576" y="815" width="4" height="4" fill="#0080ff"/><rect x="586" y="815" width="4" height="4" fill="#0080ff"/><rect x="596" y="815" width="4" height="4" fill="#0080ff"/><rect x="606" y="815" width="4" height="4" fill="#0080ff"/><rect x="616" y="815" width="4" height="4" fill="#0080ff"/><rect x="626" y="815" width="4" height="4" fill="#0080ff"/><rect x="636" y="815" width="4" height="4" fill="#0080ff"/><rect x="646" y="815" width="4" height="4" fill="#0080ff"/><rect x="656" y="815" width="4" height="4" fill="#0080ff"/><rect x="666" y="815" width="4" height="4" fill="#0080ff"/><rect x="676" y="815" width="4" height="4" fill="#0080ff"/><rect x="686" y="815" width="4" height="4" fill="#0080ff"/><rect x="696" y="815" width="4" height="4" fill="#0080ff"/><rect x="706" y="815" width="4" height="4" fill="#0080ff"/><rect x="716" y="815" width="4" height="4" fill="#0080ff"/><rect x="726" y="815" width="4" height="4" fill="#0080ff"/><rect x="736" y="815" width="4" height="4" fill="#0080ff"/><rect x="746" y="815" width="4" height="4" fill="#0080ff"/><rect x="756" y="815" width="4" height="4" fill="#0080ff"/><rect x="766" y="815" width="4" height="4" fill="#0080ff"/><rect x="776" y="815" width="4" height="4" fill="#0080ff"/><rect x="786" y="815" width="4" height="4" fill="#0080ff"/><rect x="796" y="815" width="4" height="4" fill="#0080ff"/><rect x="806" y="815" width="4" height="4" fill="#0080ff"/><rect x="816" y="815" width="4" height="4" fill="#0080ff"/><rect x="826" y="815" width="4" height="4" fill="#0080ff"/><rect x="836" y="815" width="4" height="4" fill="#0080ff"/><rect x="846" y="815" width="4" height="4" fill="#0080ff"/><rect x="856" y="815" width="4" height="4" fill="#0080ff"/><rect x="866" y="815" width="4" height="4" fill="#0080ff"/><rect x="876" y="815" width="4" height="4" fill="#0080ff"/><rect x="886" y="815" width="4" height="4" fill="#0080ff"/><rect x="896" y="815" width="4" height="4" fill="#0080ff"/><rect x="906" y="815" width="4" height="4" fill="#0080ff"/><rect x="916" y="815" width="4" height="4" fill="#0080ff"/><rect x="926" y="815" width="4" height="4" fill="#0080ff"/><rect x="936" y="815" width="4" height="4" fill="#0080ff"/><rect x="946" y="815" width="4" height="4" fill="#0080ff"/><rect x="956" y="815" width="4" height="4" fill="#0080ff"/><rect x="966" y="815" width="4" height="4" fill="#0080ff"/><rect x="976" y="815" width="4" height="4" fill="#0080ff"/><rect x="986" y="815" width="4" height="4" fill="#0080ff"/><rect x="996" y="815" width="4" height="4" fill="#0080ff"/><rect x="1006" y="815" width="4" height="4" fill="#0080ff"/><rect x="1016" y="815" width="4" height="4" fill="#0080ff"/><rect x="1026" y="815" width="4" height="4" fill="#0080ff"/><rect x="1036" y="815" width="4" height="4" fill="#0080ff"/><rect x="1046" y="815" width="4" height="4" fill="#0080ff"/><rect x="1056" y="815" width="4" height="4" fill="#0080ff"/><rect x="1066" y="815" width="4" height="4" fill="#0080ff"/><rect x="1076" y="815" width="4" height="4" fill="#0080ff"/><rect x="1086" y="815" width="4" height="4" fill="#0080ff"/><rect x="1096" y="815" width="4" height="4" fill="#0080ff"/><rect x="1106" y="815" width="4" height="4" fill="#0080ff"/><rect x="1116" y="815" width="4" height="4" fill="#0080ff"/><rect x="1126" y="815" width="4" height="4" fill="#0080ff"/><rect x="1136" y="815" width="4" height="4" fill="#0080ff"/><rect x="1146" y="815" width="4" height="4" fill="#0080ff"/><rect x="1156" y="815" width="4" height="4" fill="#0080ff"/><rect x="1166" y="815" width="4" height="4" fill="#0080ff"/><rect x="1176" y="815" width="4" height="4" fill="#0080ff"/><rect x="1186" y="815" width="4" height="4" fill="#0080ff"/><rect x="1196" y="815" width="4" height="4" fill="#0080ff"/><rect x="1206" y="815" width="4" height="4" fill="#0080ff"/><rect x="1216" y="815" width="4" height="4" fill="#0080ff"/><path d="M1234.5 468V922" stroke="#fff" stroke-width="1"/><path d="M0 921.5H1235" stroke="#fff" stroke-width="1"/><path d="M1235 490.5H1238" stroke="#fff" stroke-width="1"/><path d="M1235 522.5H1238" stroke="#fff" stroke-width="1"/><path d="M1235 553.5H1238" stroke="#fff" stroke-width="1"/><path d="M1235 585.5H1238" stroke="#fff" stroke-width="1"/><path d="M1235 616.5H1238" stroke="#fff" stroke-width="1"/><path d="M1235 671.5H1238" stroke="#fff" stroke-width="1"/><path d="M1235 707.5H1238" stroke="#fff" stroke-width="1"/><path d="M1235 742.5H1238" stroke="#fff" stroke-width="1"/><path d="M1235 770.5H1238" stroke="#fff" stroke-width="1"/><path d="M1235 817.5H1238" stroke="#fff" stroke-width="1"/><path d="M1235 863.5H1238" stroke="#fff" stroke-width="1"/><path d="M8.5 922V926" stroke="#fff" stroke-width="1"/><path d="M68.5 922V926" stroke="#fff" stroke-width="1"/><path d="M128.5 922V926" stroke="#fff" stroke-width="1"/><path d="M188.5 922V926" stroke="#fff" stroke-width="1"/><path d="M258.5 922V926" stroke="#fff" stroke-width="1"/><path d="M308.5 922V926" stroke="#fff" stroke-width="1"/><path d="M358.5 922V926" stroke="#fff" stroke-width="1"/><path d="M408.5 922V926" stroke="#fff" stroke-width="1"/><path d="M468.5 922V926" stroke="#fff" stroke-width="1"/><path d="M518.5 922V926" stroke="#fff" stroke-width="1"/><path d="M578.5 922V926" stroke="#fff" stroke-width="1"/><path d="M638.5 922V926" stroke="#fff" stroke-width="1"/><path d="M738.5 922V926" stroke="#fff" stroke-width="1"/><path d="M788.5 922V926" stroke="#fff" stroke-width="1"/><path d="M838.5 922V926" stroke="#fff" stroke-width="1"/><path d="M888.5 922V926" stroke="#fff" stroke-width="1"/><path d="M938.5 922V926" stroke="#fff" stroke-width="1"/><path d="M988.5 922V926" stroke="#fff" stroke-width="1"/><path d="M1038.5 922V926" stroke="#fff" stroke-width="1"/><path d="M1098.5 922V926" stroke="#fff" stroke-width="1"/><path d="M1158.5 922V926" stroke="#fff" stroke-width="1"/><path d="M1218.5 922V926" stroke="#fff" stroke-width="1"/></svg>
<span class="t" style="left:4.6px;top:101px;font-size:12px;line-height:20px;color:#ffffff;letter-spacing:-0.533px;">F.US.DDZ22 [CBV]</span>
<span class="t" style="left:4.2px;top:446px;font-size:12px;line-height:20px;color:#ffffff;letter-spacing:0.395px;">Volume</span>
<span class="t" style="left:51.9px;top:446px;font-size:12px;line-height:20px;color:#f00;letter-spacing:0.120px;">Volume:</span>
<span class="t" style="left:4.7px;top:630px;font-size:12px;line-height:20px;color:#ffffff;letter-spacing:-0.877px;">RV</span>
<span class="t" style="left:25.0px;top:630px;font-size:12px;line-height:20px;color:#008000;letter-spacing:-0.201px;">Relative Volume: 125.0</span>
<span class="t" style="left:149.2px;top:630px;font-size:12px;line-height:20px;color:#f00;letter-spacing:-0.081px;">Cumulative Volume Ratio: 70.2</span>
<span class="t" style="left:316.7px;top:630px;font-size:12px;line-height:20px;color:#808080;letter-spacing:-0.499px;">100%: 100.0</span>
<span class="t" style="left:386.9px;top:630px;font-size:12px;line-height:20px;color:#ffffff;letter-spacing:-0.292px;">(25, All Days, No, Average Volume, Volume, 2, 20, 120, #008000, 80, #0000FF)</span>
<span class="t" style="left:4.7px;top:752px;font-size:12px;line-height:20px;color:#ffffff;letter-spacing:-0.040px;">Horizontal Lines</span>
<span class="t" style="left:95.7px;top:752px;font-size:12px;line-height:20px;color:#0080ff;letter-spacing:-0.439px;">Line1: 3531</span>
<span class="t" style="left:159.6px;top:752px;font-size:12px;line-height:20px;color:#0080ff;letter-spacing:-0.384px;">Line2: 1287</span>
<span class="t" style="left:223.5px;top:752px;font-size:12px;line-height:20px;color:#0080ff;letter-spacing:-0.326px;">Line3: 0</span>
<span class="t" style="left:269.2px;top:752px;font-size:12px;line-height:20px;color:#0080ff;letter-spacing:-0.144px;">Line4: -1157</span>
<span class="t" style="left:338.7px;top:752px;font-size:12px;line-height:20px;color:#0080ff;letter-spacing:-0.369px;">Line5: -3521</span>
<span class="t" style="left:407.6px;top:752px;font-size:12px;line-height:20px;color:#ffffff;letter-spacing:-0.036px;">Cumulative Delta Bars - Volume</span>
<span class="t" style="left:582.0px;top:752px;font-size:12px;line-height:20px;color:#00ff00;letter-spacing:-0.119px;">Open: -89</span>
<span class="t" style="left:639.6px;top:752px;font-size:12px;line-height:20px;color:#008000;letter-spacing:0.034px;">High: -63</span>
<span class="t" style="left:694.8px;top:752px;font-size:12px;line-height:20px;color:#ff0000;letter-spacing:-0.189px;">Low: -161</span>
<span class="t" style="left:751.9px;top:752px;font-size:12px;line-height:20px;color:#8b0000;letter-spacing:-0.199px;">Close: -66</span>
<span class="t" style="left:812.7px;top:752px;font-size:12px;line-height:20px;color:#ffffff;letter-spacing:-0.075px;">(Yes, No)</span>
<span class="t" style="left:4.7px;top:898px;font-size:12px;line-height:20px;color:#ffffff;letter-spacing:-0.211px;">Percent Change Since Open</span>
<span class="t" style="left:157.6px;top:898px;font-size:12px;line-height:20px;color:#00ff00;letter-spacing:-0.272px;">Percent Change: 0.24%</span>
<span class="t" style="left:284.2px;top:898px;font-size:12px;line-height:20px;color:#ffff00;letter-spacing:-0.262px;">Zero Line: 0.00%</span>
<span class="t" style="left:379.6px;top:898px;font-size:12px;line-height:20px;color:#ffffff;letter-spacing:-0.185px;">(Time Period Type/Length, Days, 1, Open, Last, 1)</span>
<span class="t" style="left:1238.5px;top:481px;font-size:12px;line-height:20px;color:#ffffff;letter-spacing:-0.474px;">8000</span>
<span class="t" style="left:1238.5px;top:513px;font-size:12px;line-height:20px;color:#ffffff;letter-spacing:-0.474px;">6000</span>
<span class="t" style="left:1238.5px;top:544px;font-size:12px;line-height:20px;color:#ffffff;letter-spacing:-0.474px;">4000</span>
<span class="t" style="left:1238.5px;top:576px;font-size:12px;line-height:20px;color:#ffffff;letter-spacing:-0.474px;">2000</span>
<span class="t" style="left:1238.5px;top:607px;font-size:12px;line-height:20px;color:#ffffff;letter-spacing:0.726px;">0</span>
<span class="t" style="left:1238.5px;top:662px;font-size:12px;line-height:20px;color:#ffffff;letter-spacing:-0.551px;">2000.0</span>
<span class="t" style="left:1238.5px;top:698px;font-size:12px;line-height:20px;color:#ffffff;letter-spacing:-0.551px;">1000.0</span>
<span class="t" style="left:1238.5px;top:733px;font-size:12px;line-height:20px;color:#ffffff;letter-spacing:-0.427px;">0.0</span>
<span class="t" style="left:1238.5px;top:761px;font-size:12px;line-height:20px;color:#ffffff;letter-spacing:-0.374px;">400</span>
<span class="t" style="left:1238.5px;top:808px;font-size:12px;line-height:20px;color:#ffffff;letter-spacing:0.726px;">0</span>
<span class="t" style="left:1238.5px;top:854px;font-size:12px;line-height:20px;color:#ffffff;letter-spacing:-0.155px;">-400</span>
<div style="left:0px;top:925px;width:38px;height:12px;background:#fff;"></div>
<span class="t" style="left:-2.8px;top:924px;font-size:12px;line-height:20px;color:#000;letter-spacing:-0.166px;">2-10-18</span>
<div style="left:243px;top:925px;width:31px;height:12px;background:#fff;"></div>
<span class="t" style="left:244.5px;top:924px;font-size:12px;line-height:20px;color:#000;letter-spacing:-0.419px;">10-19</span>
<div style="left:723px;top:925px;width:31px;height:12px;background:#fff;"></div>
<span class="t" style="left:724.5px;top:924px;font-size:12px;line-height:20px;color:#000;letter-spacing:-0.419px;">10-20</span>
<span class="t" style="left:46.8px;top:924px;font-size:12px;line-height:20px;color:#ffffff;letter-spacing:-0.614px;">17:18:13</span>
<span class="t" style="left:107.0px;top:924px;font-size:12px;line-height:20px;color:#ffffff;letter-spacing:-0.639px;">18:34:41</span>
<span class="t" style="left:166.6px;top:924px;font-size:12px;line-height:20px;color:#ffffff;letter-spacing:-0.526px;">19:08:29</span>
<span class="t" style="left:289.2px;top:924px;font-size:12px;line-height:20px;color:#ffffff;letter-spacing:-0.305px;">8:45:58</span>
<span class="t" style="left:339.2px;top:924px;font-size:12px;line-height:20px;color:#ffffff;letter-spacing:-0.377px;">9:14:38</span>
<span class="t" style="left:387.2px;top:924px;font-size:12px;line-height:20px;color:#ffffff;letter-spacing:-0.601px;">10:32:59</span>
<span class="t" style="left:455.2px;top:924px;font-size:12px;line-height:20px;color:#ffffff;letter-spacing:-0.526px;">13:36</span>
<span class="t" style="left:497.2px;top:924px;font-size:12px;line-height:20px;color:#ffffff;letter-spacing:-0.664px;">14:29:01</span>
<span class="t" style="left:556.9px;top:924px;font-size:12px;line-height:20px;color:#ffffff;letter-spacing:-0.626px;">15:39:41</span>
<span class="t" style="left:617.2px;top:924px;font-size:12px;line-height:20px;color:#ffffff;letter-spacing:-0.601px;">17:26:21</span>
<span class="t" style="left:769.2px;top:924px;font-size:12px;line-height:20px;color:#ffffff;letter-spacing:-0.520px;">6:52:41</span>
<span class="t" style="left:819.2px;top:924px;font-size:12px;line-height:20px;color:#ffffff;letter-spacing:-0.377px;">9:09:19</span>
<span class="t" style="left:868.8px;top:924px;font-size:12px;line-height:20px;color:#ffffff;letter-spacing:-0.391px;">9:46:22</span>
<span class="t" style="left:917.2px;top:924px;font-size:12px;line-height:20px;color:#ffffff;letter-spacing:-0.589px;">10:52:17</span>
<span class="t" style="left:974.7px;top:924px;font-size:12px;line-height:20px;color:#ffffff;letter-spacing:-0.626px;">12:41</span>
<span class="t" style="left:1016.2px;top:924px;font-size:12px;line-height:20px;color:#ffffff;letter-spacing:-0.439px;">13:40:55</span>
<span class="t" style="left:1076.8px;top:924px;font-size:12px;line-height:20px;color:#ffffff;letter-spacing:-0.489px;">14:34:17</span>
<span class="t" style="left:1137.2px;top:924px;font-size:12px;line-height:20px;color:#ffffff;letter-spacing:-0.589px;">15:35:40</span>
<span class="t" style="left:1197.2px;top:924px;font-size:12px;line-height:20px;color:#ffffff;letter-spacing:-0.539px;">17:57:48</span>
<div style="left:1261px;top:925px;width:15px;height:12px;background:#00c000;"></div>
<span class="t" style="left:1264.7px;top:922px;font-size:12px;line-height:20px;color:#fff;letter-spacing:1.200px;">9</span>
<div style="left:862px;top:0px;width:414px;height:468px;background:#f0f0f0;"></div>
<div style="left:862px;top:0px;width:414px;height:32px;background:#fff;"></div>
<div style="left:866px;top:66px;width:2px;height:28px;background:#8c8c8c;"></div>
<svg class="a" style="left:1263px;top:10px" width="12" height="12" viewBox="0 0 12 12"><path d="M1 1l10 10M11 1L1 11" stroke="#9a9a9a" stroke-width="1.1" fill="none"/></svg>
<span class="t" style="left:871.6px;top:42px;font-size:13.33px;line-height:20px;color:#000;letter-spacing:-0.073px;">Studies to Graph:</span>
<div style="left:872px;top:66px;width:278px;height:278px;background:#fff;box-shadow:inset 1px 1px 0 #a0a0a0,inset -1px -1px 0 #fff,inset 2px 2px 0 #696969,inset -2px -2px 0 #e3e3e3;"></div>
<div style="left:874px;top:67px;width:275px;height:258px;overflow:hidden">
<span class="t" style="left:1.6px;top:-1px;font-size:13.33px;line-height:20px;color:#000;letter-spacing:-0.015px;word-spacing:-0.8px">1 | ID:9  Percent Change Since Open | 0 ms | Ca</span>
<span class="t" style="left:1.6px;top:15px;font-size:13.33px;line-height:20px;color:#000;letter-spacing:0.024px;word-spacing:-0.8px">2 | ID:11  Volume Alert Color, Arrow (Color Bar B</span>
<span class="t" style="left:1.6px;top:31px;font-size:13.33px;line-height:20px;color:#000;letter-spacing:0.062px;word-spacing:-0.8px">3 | ID:12  RV. Alert, Color, Arrow (Color Bar Bas</span>
<div style="left:1px;top:49px;width:274px;height:16px;background:#0078d7;"></div>
<span class="t" style="left:1.6px;top:47px;font-size:13.33px;line-height:20px;color:#fff;letter-spacing:0.066px;word-spacing:-0.8px">4 | ID:13  Delta Alert Color, Arrow (Color Bar Ba</span>
<span class="t" style="left:1.6px;top:63px;font-size:13.33px;line-height:20px;color:#000;letter-spacing:-0.088px;word-spacing:-0.8px">5 | ID:3  Volume | 0 ms | CalcOrder: 2 | S_ID: 8</span>
<span class="t" style="left:1.6px;top:79px;font-size:13.33px;line-height:20px;color:#000;letter-spacing:0.134px;word-spacing:-0.8px">6 | ID:8  Volume Weighted Average Price - Rol</span>
<span class="t" style="left:1.6px;top:95px;font-size:13.33px;line-height:20px;color:#000;letter-spacing:-0.053px;word-spacing:-0.8px">7 | ID:2  Horizontal Lines | 1 ms | CalcOrder: 4 | S</span>
<span class="t" style="left:1.6px;top:111px;font-size:13.33px;line-height:20px;color:#000;letter-spacing:-0.022px;word-spacing:-0.8px">8 | ID:4  Cumulative Delta Bars - Volume | 2 ms</span>
<span class="t" style="left:1.6px;top:127px;font-size:13.33px;line-height:20px;color:#000;letter-spacing:0.025px;word-spacing:-0.8px">9 | ID:1  RV (Relative Volume) | 53 ms | CalcOrd</span>
<span class="t" style="left:1.6px;top:143px;font-size:13.33px;line-height:20px;color:#000;letter-spacing:0.062px;word-spacing:-0.8px">10 | ID:7  Large Volume Trade Indicator | 0 ms |</span>
<span class="t" style="left:1.6px;top:159px;font-size:13.33px;line-height:20px;color:#000;letter-spacing:0.141px;word-spacing:-0.8px">11 | ID:5  Color Background Based On Alert Co</span>
<span class="t" style="left:1.6px;top:175px;font-size:13.33px;line-height:20px;color:#000;letter-spacing:-0.013px;word-spacing:-0.8px">12 | ID:10  Cumulative delta SG2 (Color Bar Bas</span>
<span class="t" style="left:1.6px;top:191px;font-size:13.33px;line-height:20px;color:#000;letter-spacing:0.118px;word-spacing:-0.8px">13 | ID:6  Color Background Based On Alert Co</span>
</div>
<div style="left:874px;top:326px;width:274px;height:16px;background:#f0f0f0;"></div>
<div style="left:891px;top:326px;width:107px;height:15px;background:#cdcdcd;"></div>
<svg class="a" style="left:878px;top:329px" width="8" height="9" viewBox="0 0 8 9"><path d="M6 1.2L2.6 4.5 6 7.8" stroke="#404040" stroke-width="1.9" fill="none"/></svg>
<svg class="a" style="left:1135.5px;top:329px" width="8" height="9" viewBox="0 0 8 9"><path d="M2 1.2l3.4 3.3L2 7.8" stroke="#404040" stroke-width="1.9" fill="none"/></svg>
<div style="left:1162px;top:66px;width:108px;height:28px;background:#f0f0f0;box-shadow:inset 1px 1px 0 #fff,inset -1px -1px 0 #696969,inset 2px 2px 0 #e3e3e3,inset -2px -2px 0 #a0a0a0;"></div>
<span class="t" style="left:1187.7px;top:70px;font-size:13.33px;line-height:20px;color:#000;letter-spacing:0.437px;">Move Up</span>
<div style="left:1162px;top:106px;width:108px;height:28px;background:#f0f0f0;box-shadow:inset 1px 1px 0 #fff,inset -1px -1px 0 #696969,inset 2px 2px 0 #e3e3e3,inset -2px -2px 0 #a0a0a0;"></div>
<span class="t" style="left:1179.7px;top:110px;font-size:13.33px;line-height:20px;color:#000;letter-spacing:0.224px;">Move Down</span>
<div style="left:1162px;top:162px;width:108px;height:28px;background:#f0f0f0;box-shadow:inset 1px 1px 0 #fff,inset -1px -1px 0 #696969,inset 2px 2px 0 #e3e3e3,inset -2px -2px 0 #a0a0a0;"></div>
<span class="t" style="left:1191.7px;top:166px;font-size:13.33px;line-height:20px;color:#000;letter-spacing:0.029px;">Settings</span>
<div style="left:1186px;top:213px;width:13px;height:13px;background:#fff;box-shadow:inset 1px 1px 0 #a0a0a0,inset -1px -1px 0 #fff,inset 2px 2px 0 #696969,inset -2px -2px 0 #e3e3e3;"></div>
<span class="t" style="left:1203.8px;top:210px;font-size:13.33px;line-height:20px;color:#000;letter-spacing:0.471px;">Hide</span>
<div style="left:1162px;top:250px;width:108px;height:28px;background:#f0f0f0;box-shadow:inset 1px 1px 0 #fff,inset -1px -1px 0 #696969,inset 2px 2px 0 #e3e3e3,inset -2px -2px 0 #a0a0a0;"></div>
<span class="t" style="left:1186.7px;top:254px;font-size:13.33px;line-height:20px;color:#000;letter-spacing:0.314px;">Duplicate</span>
<div style="left:1162px;top:298px;width:108px;height:28px;background:#f0f0f0;box-shadow:inset 1px 1px 0 #fff,inset -1px -1px 0 #696969,inset 2px 2px 0 #e3e3e3,inset -2px -2px 0 #a0a0a0;"></div>
<span class="t" style="left:1189.7px;top:302px;font-size:13.33px;line-height:20px;color:#000;letter-spacing:0.460px;">Remove</span>
<div style="left:897px;top:355px;width:372px;height:99px;border:1px solid #fff;box-sizing:border-box;"></div>
<div style="left:896px;top:354px;width:372px;height:99px;border:1px solid #a0a0a0;box-sizing:border-box;"></div>
<div style="left:903px;top:354px;width:203px;height:2px;background:#f0f0f0;"></div>
<span class="t" style="left:904.8px;top:345px;font-size:13.33px;line-height:20px;color:#000;letter-spacing:0.053px;">Save Studies As Study Collection</span>
<span class="t" style="left:907.2px;top:365px;font-size:13.33px;line-height:20px;color:#000;letter-spacing:0.228px;">Name:</span>
<div style="left:906px;top:388px;width:229px;height:23px;background:#fff;box-shadow:inset 1px 1px 0 #a0a0a0,inset -1px -1px 0 #fff,inset 2px 2px 0 #696969,inset -2px -2px 0 #e3e3e3;"></div>
<div style="left:1117px;top:390px;width:17px;height:20px;background:#f0f0f0;box-shadow:inset 1px 1px 0 #fff,inset -1px -1px 0 #696969,inset 2px 2px 0 #e3e3e3,inset -2px -2px 0 #a0a0a0;"></div>
<svg class="a" style="left:1122.0px;top:397.5px" width="7" height="4" viewBox="0 0 7 4"><path d="M0 0h7L3.5 4z" fill="#000"/></svg>
<div style="left:906px;top:427px;width:13px;height:13px;background:#fff;box-shadow:inset 1px 1px 0 #a0a0a0,inset -1px -1px 0 #fff,inset 2px 2px 0 #696969,inset -2px -2px 0 #e3e3e3;"></div>
<span class="t" style="left:923.2px;top:424px;font-size:13.33px;line-height:20px;color:#000;letter-spacing:0.007px;">Prompt to Remove Existing Studies</span>
<div style="left:1154px;top:358px;width:112px;height:28px;background:#f0f0f0;box-shadow:inset 1px 1px 0 #fff,inset -1px -1px 0 #696969,inset 2px 2px 0 #e3e3e3,inset -2px -2px 0 #a0a0a0;"></div>
<span class="t" style="left:1172.7px;top:362px;font-size:13.33px;line-height:20px;color:#000;letter-spacing:0.296px;">Save Single</span>
<div style="left:1154px;top:390px;width:112px;height:28px;background:#f0f0f0;box-shadow:inset 1px 1px 0 #fff,inset -1px -1px 0 #696969,inset 2px 2px 0 #e3e3e3,inset -2px -2px 0 #a0a0a0;"></div>
<span class="t" style="left:1184.2px;top:394px;font-size:13.33px;line-height:20px;color:#000;letter-spacing:0.404px;">Save All</span>
<div style="left:1154px;top:422px;width:112px;height:28px;background:#f0f0f0;box-shadow:inset 1px 1px 0 #fff,inset -1px -1px 0 #696969,inset 2px 2px 0 #e3e3e3,inset -2px -2px 0 #a0a0a0;"></div>
<span class="t" style="left:1189.2px;top:426px;font-size:13.33px;line-height:20px;color:#000;letter-spacing:0.478px;">Delete</span>
<div style="left:850px;top:426px;width:32px;height:28px;background:#f0f0f0;box-shadow:inset 1px 1px 0 #fff,inset -1px -1px 0 #696969,inset 2px 2px 0 #e3e3e3,inset -2px -2px 0 #a0a0a0;"></div>
<div style="left:862px;top:467px;width:414px;height:1px;background:#fff;"></div>
<div style="left:98px;top:1px;width:768px;height:620px;background:#f0f0f0;border:1px solid rgba(0,0,0,.56);background-clip:padding-box;box-shadow:0 0 10px 1px rgba(0,0,0,.3);"></div>
<div style="left:99px;top:2px;width:766px;height:618px;box-shadow:inset 0 0 0 1px #fff;"></div>
<div style="left:99px;top:2px;width:766px;height:30px;background:#fff;"></div>
<span class="t" style="left:106.5px;top:7px;font-size:12px;line-height:20px;color:#000;letter-spacing:-0.081px;">Study Settings: Delta Alert Color, Arrow. ID:13 (Color Bar Based On Alert Condition)</span>
<svg class="a" style="left:844px;top:10px" width="12" height="12" viewBox="0 0 12 12"><path d="M1 1l10 10M11 1L1 11" stroke="#111" stroke-width="1.15" fill="none"/></svg>
<div style="left:113px;top:70px;width:740px;height:492px;background:#f0f0f0;box-shadow:inset 1px 1px 0 #fff,inset -1px -1px 0 #696969,inset 2px 2px 0 #f0f0f0,inset -2px -2px 0 #a0a0a0;"></div>
<div style="left:115px;top:49px;width:124px;height:21px;background:#f0f0f0;box-shadow:inset 1px 1px 0 #fff;border-radius:2px 0 0 0;"></div>
<div style="left:319px;top:49px;width:46px;height:21px;background:#f0f0f0;box-shadow:inset 1px 1px 0 #fff,inset -1px 0 0 #696969,inset -2px 0 0 #a0a0a0;border-radius:2px 2px 0 0;"></div>
<div style="left:238px;top:46px;width:81px;height:24px;background:#f0f0f0;box-shadow:inset 1px 1px 0 #fff,inset -1px 0 0 #696969,inset -2px 0 0 #a0a0a0;border-radius:2px 2px 0 0;"></div>
<div style="left:239px;top:70px;width:78px;height:2px;background:#f0f0f0;"></div>
<span class="t" style="left:120.6px;top:50px;font-size:13.33px;line-height:20px;color:#000;letter-spacing:-0.091px;">Settings and Inputs</span>
<span class="t" style="left:244.6px;top:48px;font-size:13.33px;line-height:20px;color:#000;letter-spacing:0.236px;">Subgraphs</span>
<span class="t" style="left:322.5px;top:50px;font-size:13.33px;line-height:20px;color:#000;letter-spacing:0.121px;">Alerts</span>
<svg class="a" style="left:270px;top:20px" width="50" height="40" viewBox="270 20 50 40"><defs><filter id="bl" x="-30%" y="-30%" width="160%" height="160%"><feGaussianBlur stdDeviation="1.3"/></filter></defs><g filter="url(#bl)" opacity=".55" transform="translate(4,3.5)"><path d="M303.5 28L291.5 41.5" stroke="#404040" stroke-width="1.6"/><path d="M284.9 48.8L289.3 38.9 295.2 44.1z" fill="#404040"/></g><path d="M303.5 28L291.5 41.5" stroke="#f00" stroke-width="1.5"/><path d="M284.9 48.8L289.3 38.9 295.2 44.1z" fill="#f00"/></svg>
<span class="t" style="left:128.7px;top:84px;font-size:13.33px;line-height:20px;color:#000;letter-spacing:0.092px;">Graph Draw Type:</span>
<div style="left:247px;top:81px;width:223px;height:22px;background:#f0f0f0;box-shadow:inset 1px 1px 0 #a0a0a0,inset -1px -1px 0 #fff,inset 2px 2px 0 #696969,inset -2px -2px 0 #e3e3e3;"></div>
<div style="left:452px;top:83px;width:17px;height:19px;background:#f0f0f0;box-shadow:inset 1px 1px 0 #fff,inset -1px -1px 0 #696969,inset 2px 2px 0 #e3e3e3,inset -2px -2px 0 #a0a0a0;"></div>
<svg class="a" style="left:457.0px;top:90.0px" width="7" height="4" viewBox="0 0 7 4"><path d="M0 0h7L3.5 4z" fill="#a0a0a0"/></svg>
<span class="t" style="left:250.6px;top:84px;font-size:13.33px;line-height:20px;color:#6d6d6d;letter-spacing:-0.055px;">Custom</span>
<div style="left:489px;top:86px;width:13px;height:13px;background:#f0f0f0;box-shadow:inset 1px 1px 0 #a0a0a0,inset -1px -1px 0 #fff,inset 2px 2px 0 #696969,inset -2px -2px 0 #e3e3e3;"></div>
<span class="t" style="left:506.9px;top:83px;font-size:13.33px;line-height:20px;color:#a0a0a0;letter-spacing:-0.048px;">Use Chart Graphics Settings For Subgraph Colors</span>
<div style="left:129px;top:115px;width:710px;height:168px;background:#fff;box-shadow:inset 1px 1px 0 #a0a0a0,inset -1px -1px 0 #fff,inset 2px 2px 0 #696969,inset -2px -2px 0 #e3e3e3;"></div>
<div style="left:131px;top:118px;width:706px;height:18px;background:#f0f0f0;"></div>
<div style="left:131px;top:135px;width:706px;height:1px;background:#a0a0a0;"></div>
<div style="left:131px;top:136px;width:706px;height:1px;background:#fff;"></div>
<span class="t" style="left:136.2px;top:118px;font-size:13.33px;line-height:20px;color:#000;letter-spacing:0.011px;">Subgraph</span>
<span class="t" style="left:390.2px;top:118px;font-size:13.33px;line-height:20px;color:#000;letter-spacing:0.145px;">Draw Style</span>
<span class="t" style="left:527.6px;top:118px;font-size:13.33px;line-height:20px;color:#000;letter-spacing:0.046px;">Line Style</span>
<span class="t" style="left:654.4px;top:118px;font-size:13.33px;line-height:20px;color:#000;letter-spacing:0.425px;">Width</span>
<span class="t" style="left:717.0px;top:118px;font-size:13.33px;line-height:20px;color:#000;letter-spacing:0.258px;">Line Label</span>
<div style="left:384px;top:118px;width:1px;height:18px;background:#a0a0a0;"></div>
<div style="left:385px;top:118px;width:1px;height:18px;background:#fff;"></div>
<div style="left:521px;top:118px;width:1px;height:18px;background:#a0a0a0;"></div>
<div style="left:522px;top:118px;width:1px;height:18px;background:#fff;"></div>
<div style="left:648px;top:118px;width:1px;height:18px;background:#a0a0a0;"></div>
<div style="left:649px;top:118px;width:1px;height:18px;background:#fff;"></div>
<div style="left:711px;top:118px;width:1px;height:18px;background:#a0a0a0;"></div>
<div style="left:712px;top:118px;width:1px;height:18px;background:#fff;"></div>
<div style="left:836px;top:118px;width:1px;height:18px;background:#a0a0a0;"></div>
<div style="left:837px;top:118px;width:1px;height:18px;background:#fff;"></div>
<div style="left:131px;top:155px;width:706px;height:1px;background:#f0f0f0;"></div>
<div style="left:131px;top:172px;width:706px;height:1px;background:#f0f0f0;"></div>
<div style="left:131px;top:189px;width:706px;height:1px;background:#f0f0f0;"></div>
<div style="left:131px;top:206px;width:706px;height:1px;background:#f0f0f0;"></div>
<div style="left:131px;top:223px;width:706px;height:1px;background:#f0f0f0;"></div>
<div style="left:131px;top:240px;width:706px;height:1px;background:#f0f0f0;"></div>
<div style="left:131px;top:257px;width:706px;height:1px;background:#f0f0f0;"></div>
<div style="left:385px;top:138px;width:1px;height:126px;background:#f0f0f0;"></div>
<div style="left:522px;top:138px;width:1px;height:126px;background:#f0f0f0;"></div>
<div style="left:649px;top:138px;width:1px;height:126px;background:#f0f0f0;"></div>
<div style="left:712px;top:138px;width:1px;height:126px;background:#f0f0f0;"></div>
<div style="left:133px;top:139px;width:704px;height:16px;background:#0078d7;"></div>
<div style="left:385px;top:139px;width:1px;height:16px;background:#fff;"></div>
<div style="left:522px;top:139px;width:1px;height:16px;background:#fff;"></div>
<div style="left:649px;top:139px;width:1px;height:16px;background:#fff;"></div>
<div style="left:712px;top:139px;width:1px;height:16px;background:#fff;"></div>
<div style="left:133px;top:139px;width:17px;height:16px;background:#007ceb;"></div>
<div style="left:150px;top:139px;width:15px;height:16px;background:repeating-conic-gradient(#ff80c0 0 25%,#0078d7 0 50%) 0 0/2px 2px;"></div>
<div style="left:133px;top:156px;width:32px;height:16px;background:#f0f;"></div>
<div style="left:133px;top:173px;width:32px;height:16px;background:#0ff;"></div>
<span class="t" style="left:166.8px;top:138px;font-size:13.33px;line-height:20px;color:#fff;letter-spacing:-0.131px;">Color Bar (SG1)</span>
<span class="t" style="left:390.2px;top:138px;font-size:13.33px;line-height:20px;color:#fff;letter-spacing:0.024px;">Arrow Right</span>
<span class="t" style="left:527.6px;top:138px;font-size:13.33px;line-height:20px;color:#fff;">-</span>
<span class="t" style="left:654.4px;top:138px;font-size:13.33px;line-height:20px;color:#fff;">2</span>
<span class="t" style="left:717.0px;top:138px;font-size:13.33px;line-height:20px;color:#fff;">-</span>
<span class="t" style="left:166.8px;top:155px;font-size:13.33px;line-height:20px;color:#000;letter-spacing:-0.099px;">Extension Lines (SG2)</span>
<span class="t" style="left:390.2px;top:155px;font-size:13.33px;line-height:20px;color:#000;letter-spacing:0.549px;">Line</span>
<span class="t" style="left:527.6px;top:155px;font-size:13.33px;line-height:20px;color:#000;letter-spacing:0.471px;">Solid</span>
<span class="t" style="left:654.4px;top:155px;font-size:13.33px;line-height:20px;color:#000;">1</span>
<span class="t" style="left:717.0px;top:155px;font-size:13.33px;line-height:20px;color:#000;">-</span>
<span class="t" style="left:166.8px;top:172px;font-size:13.33px;line-height:20px;color:#000;letter-spacing:-0.144px;">Sum of Alerts (SG3)</span>
<span class="t" style="left:390.2px;top:172px;font-size:13.33px;line-height:20px;color:#000;letter-spacing:0.267px;">Ignore</span>
<span class="t" style="left:527.6px;top:172px;font-size:13.33px;line-height:20px;color:#000;">-</span>
<span class="t" style="left:654.4px;top:172px;font-size:13.33px;line-height:20px;color:#000;">-</span>
<span class="t" style="left:717.0px;top:172px;font-size:13.33px;line-height:20px;color:#000;">-</span>
<div style="left:131px;top:265px;width:706px;height:16px;background:#f0f0f0;"></div>
<div style="left:148px;top:265px;width:670px;height:15px;background:#cdcdcd;"></div>
<svg class="a" style="left:135px;top:268px" width="8" height="9" viewBox="0 0 8 9"><path d="M6 1.2L2.6 4.5 6 7.8" stroke="#404040" stroke-width="1.9" fill="none"/></svg>
<svg class="a" style="left:825px;top:268px" width="8" height="9" viewBox="0 0 8 9"><path d="M2 1.2l3.4 3.3L2 7.8" stroke="#404040" stroke-width="1.9" fill="none"/></svg>
<svg class="a" style="left:580px;top:248px" width="14" height="21" viewBox="0 0 14 21"><path d="M1.5 1.5v15.2l3.6-3.4 2.6 6 2.3-1-2.6-5.8h5z" fill="#fff" stroke="#1a1a2a" stroke-width="1.1" stroke-linejoin="round"/></svg>
<div style="left:130px;top:294px;width:709px;height:184px;border:1px solid #fff;box-sizing:border-box;"></div>
<div style="left:129px;top:293px;width:709px;height:184px;border:1px solid #a0a0a0;box-sizing:border-box;"></div>
<div style="left:136px;top:293px;width:96.5px;height:2px;background:#f0f0f0;"></div>
<span class="t" style="left:137.4px;top:283px;font-size:13.33px;line-height:20px;color:#000;letter-spacing:-0.157px;">Color Bar (SG1)</span>
<span class="t" style="left:140.5px;top:299px;font-size:13.33px;line-height:20px;color:#000;letter-spacing:0.057px;">Color:</span>
<span class="t" style="left:208.8px;top:299px;font-size:13.33px;line-height:20px;color:#000;letter-spacing:-0.077px;">Draw Style:</span>
<span class="t" style="left:364.8px;top:300px;font-size:13.33px;line-height:20px;color:#a0a0a0;letter-spacing:-0.059px;">Line Style:</span>
<span class="t" style="left:488.6px;top:299px;font-size:13.33px;line-height:20px;color:#000;letter-spacing:-0.010px;">Width/Size:</span>
<div style="left:145px;top:319px;width:24px;height:24px;background:#f0f0f0;box-shadow:inset 1px 1px 0 #fff,inset -1px -1px 0 #696969,inset 2px 2px 0 #e3e3e3,inset -2px -2px 0 #a0a0a0;"></div>
<div style="left:149px;top:323px;width:16px;height:16px;background:#0080ff;"></div>
<div style="left:173px;top:319px;width:24px;height:24px;background:#f0f0f0;box-shadow:inset 1px 1px 0 #fff,inset -1px -1px 0 #696969,inset 2px 2px 0 #e3e3e3,inset -2px -2px 0 #a0a0a0;"></div>
<div style="left:177px;top:323px;width:16px;height:16px;background:#ff80c0;"></div>
<div style="left:209px;top:319px;width:143px;height:23px;background:#fff;box-shadow:inset 1px 1px 0 #a0a0a0,inset -1px -1px 0 #fff,inset 2px 2px 0 #696969,inset -2px -2px 0 #e3e3e3;"></div>
<div style="left:334px;top:321px;width:17px;height:20px;background:#f0f0f0;box-shadow:inset 1px 1px 0 #fff,inset -1px -1px 0 #696969,inset 2px 2px 0 #e3e3e3,inset -2px -2px 0 #a0a0a0;"></div>
<svg class="a" style="left:339.0px;top:328.5px" width="7" height="4" viewBox="0 0 7 4"><path d="M0 0h7L3.5 4z" fill="#000"/></svg>
<span class="t" style="left:212.6px;top:322px;font-size:13.33px;line-height:20px;color:#000;letter-spacing:0.006px;">Arrow Right</span>
<div style="left:365px;top:319px;width:111px;height:23px;background:#f0f0f0;box-shadow:inset 1px 1px 0 #a0a0a0,inset -1px -1px 0 #fff,inset 2px 2px 0 #696969,inset -2px -2px 0 #e3e3e3;"></div>
<div style="left:458px;top:321px;width:17px;height:20px;background:#f0f0f0;box-shadow:inset 1px 1px 0 #fff,inset -1px -1px 0 #696969,inset 2px 2px 0 #e3e3e3,inset -2px -2px 0 #a0a0a0;"></div>
<svg class="a" style="left:463.0px;top:328.5px" width="7" height="4" viewBox="0 0 7 4"><path d="M0 0h7L3.5 4z" fill="#a0a0a0"/></svg>
<div style="left:489px;top:319px;width:58px;height:23px;background:#fff;box-shadow:inset 1px 1px 0 #a0a0a0,inset -1px -1px 0 #fff,inset 2px 2px 0 #696969,inset -2px -2px 0 #e3e3e3;"></div>
<span class="t" style="left:491.2px;top:322px;font-size:13.33px;line-height:20px;color:#000;">2</span>
<div style="left:530px;top:321px;width:16px;height:10px;background:#f0f0f0;box-shadow:inset 1px 1px 0 #fff,inset -1px -1px 0 #696969,inset 2px 2px 0 #e3e3e3,inset -2px -2px 0 #a0a0a0;"></div>
<div style="left:530px;top:331px;width:16px;height:10px;background:#f0f0f0;box-shadow:inset 1px 1px 0 #fff,inset -1px -1px 0 #696969,inset 2px 2px 0 #e3e3e3,inset -2px -2px 0 #a0a0a0;"></div>
<svg class="a" style="left:535.5px;top:324.5px" width="5" height="3" viewBox="0 0 5 3"><path d="M0.5 2.6h4L2.5 0.4z" fill="#000"/></svg>
<svg class="a" style="left:535.5px;top:334.5px" width="5" height="3" viewBox="0 0 5 3"><path d="M0.5 0.4h4L2.5 2.6z" fill="#000"/></svg>
<span class="t" style="left:140.5px;top:341px;font-size:13.33px;line-height:20px;color:#000;letter-spacing:-0.058px;">Auto-Coloring:</span>
<div style="left:257px;top:346px;width:13px;height:13px;background:#fff;box-shadow:inset 1px 1px 0 #a0a0a0,inset -1px -1px 0 #fff,inset 2px 2px 0 #696969,inset -2px -2px 0 #e3e3e3;"></div>
<span class="t" style="left:274.7px;top:342px;font-size:13.33px;line-height:20px;color:#000;letter-spacing:0.357px;">Label</span>
<div style="left:329px;top:343px;width:24px;height:24px;background:#f0f0f0;box-shadow:inset 1px 1px 0 #fff,inset -1px -1px 0 #696969,inset 2px 2px 0 #e3e3e3,inset -2px -2px 0 #a0a0a0;"></div>
<div style="left:333px;top:347px;width:16px;height:16px;background:#a0a0a0;"></div>
<span class="t" style="left:364.8px;top:342px;font-size:13.33px;line-height:20px;color:#a0a0a0;letter-spacing:-0.052px;">Text to Draw:</span>
<div style="left:141px;top:361px;width:106px;height:23px;background:#fff;box-shadow:inset 1px 1px 0 #a0a0a0,inset -1px -1px 0 #fff,inset 2px 2px 0 #696969,inset -2px -2px 0 #e3e3e3;"></div>
<div style="left:229px;top:363px;width:17px;height:20px;background:#f0f0f0;box-shadow:inset 1px 1px 0 #fff,inset -1px -1px 0 #696969,inset 2px 2px 0 #e3e3e3,inset -2px -2px 0 #a0a0a0;"></div>
<svg class="a" style="left:234.0px;top:370.5px" width="7" height="4" viewBox="0 0 7 4"><path d="M0 0h7L3.5 4z" fill="#000"/></svg>
<span class="t" style="left:144.7px;top:364px;font-size:13.33px;line-height:20px;color:#000;letter-spacing:0.217px;">Based on Slo</span>
<div style="left:257px;top:379px;width:13px;height:13px;background:#fff;box-shadow:inset 1px 1px 0 #a0a0a0,inset -1px -1px 0 #fff,inset 2px 2px 0 #696969,inset -2px -2px 0 #e3e3e3;"></div>
<svg class="a" style="left:260px;top:382px" width="7" height="7" viewBox="0 0 7 7"><path d="M0 2v3l2 2 5-5V-1L2 4z" fill="#000" shape-rendering="crispEdges"/></svg>
<span class="t" style="left:274.7px;top:368px;font-size:13.33px;line-height:20px;color:#000;letter-spacing:-0.016px;">Include in</span>
<span class="t" style="left:274.7px;top:383px;font-size:13.33px;line-height:20px;color:#000;letter-spacing:0.124px;">Summary</span>
<div style="left:365px;top:361px;width:111px;height:23px;background:#f0f0f0;box-shadow:inset 1px 1px 0 #a0a0a0,inset -1px -1px 0 #fff,inset 2px 2px 0 #696969,inset -2px -2px 0 #e3e3e3;"></div>
<span class="t" style="left:140.5px;top:390px;font-size:13.33px;line-height:20px;color:#000;letter-spacing:-0.021px;">Short Name:</span>
<span class="t" style="left:364.8px;top:388px;font-size:13.33px;line-height:20px;color:#000;letter-spacing:0.157px;">Displacement:</span>
<div style="left:141px;top:409px;width:211px;height:23px;background:#fff;box-shadow:inset 1px 1px 0 #a0a0a0,inset -1px -1px 0 #fff,inset 2px 2px 0 #696969,inset -2px -2px 0 #e3e3e3;"></div>
<div style="left:365px;top:409px;width:111px;height:23px;background:#fff;box-shadow:inset 1px 1px 0 #a0a0a0,inset -1px -1px 0 #fff,inset 2px 2px 0 #696969,inset -2px -2px 0 #e3e3e3;"></div>
<span class="t" style="left:367.2px;top:411px;font-size:13.33px;line-height:20px;color:#000;">0</span>
<div style="left:459px;top:411px;width:16px;height:10px;background:#f0f0f0;box-shadow:inset 1px 1px 0 #fff,inset -1px -1px 0 #696969,inset 2px 2px 0 #e3e3e3,inset -2px -2px 0 #a0a0a0;"></div>
<div style="left:459px;top:421px;width:16px;height:10px;background:#f0f0f0;box-shadow:inset 1px 1px 0 #fff,inset -1px -1px 0 #696969,inset 2px 2px 0 #e3e3e3,inset -2px -2px 0 #a0a0a0;"></div>
<svg class="a" style="left:464.5px;top:414.5px" width="5" height="3" viewBox="0 0 5 3"><path d="M0.5 2.6h4L2.5 0.4z" fill="#000"/></svg>
<svg class="a" style="left:464.5px;top:424.5px" width="5" height="3" viewBox="0 0 5 3"><path d="M0.5 0.4h4L2.5 2.6z" fill="#000"/></svg>
<div style="left:564px;top:310px;width:131px;height:121px;border:1px solid #fff;box-sizing:border-box;"></div>
<div style="left:563px;top:309px;width:131px;height:121px;border:1px solid #a0a0a0;box-sizing:border-box;"></div>
<div style="left:570px;top:309px;width:103px;height:2px;background:#f0f0f0;"></div>
<div style="left:571px;top:302px;width:13px;height:13px;background:#fff;box-shadow:inset 1px 1px 0 #a0a0a0,inset -1px -1px 0 #fff,inset 2px 2px 0 #696969,inset -2px -2px 0 #e3e3e3;"></div>
<span class="t" style="left:588.8px;top:300px;font-size:13.33px;line-height:20px;color:#000;letter-spacing:0.183px;">Name Label:</span>
<div style="left:571px;top:324px;width:13px;height:13px;background:#f0f0f0;box-shadow:inset 1px 1px 0 #a0a0a0,inset -1px -1px 0 #fff,inset 2px 2px 0 #696969,inset -2px -2px 0 #e3e3e3;"></div>
<span class="t" style="left:588.8px;top:322px;font-size:13.33px;line-height:20px;color:#a0a0a0;letter-spacing:0.181px;">Reverse Colors</span>
<span class="t" style="left:570.2px;top:338px;font-size:13.33px;line-height:20px;color:#000;letter-spacing:0.040px;">Horizontal Align:</span>
<div style="left:571px;top:357px;width:115px;height:23px;background:#f0f0f0;box-shadow:inset 1px 1px 0 #a0a0a0,inset -1px -1px 0 #fff,inset 2px 2px 0 #696969,inset -2px -2px 0 #e3e3e3;"></div>
<div style="left:668px;top:359px;width:17px;height:20px;background:#f0f0f0;box-shadow:inset 1px 1px 0 #fff,inset -1px -1px 0 #696969,inset 2px 2px 0 #e3e3e3,inset -2px -2px 0 #a0a0a0;"></div>
<svg class="a" style="left:673.0px;top:366.5px" width="7" height="4" viewBox="0 0 7 4"><path d="M0 0h7L3.5 4z" fill="#a0a0a0"/></svg>
<span class="t" style="left:574.6px;top:360px;font-size:13.33px;line-height:20px;color:#6d6d6d;letter-spacing:0.124px;">Right Edge</span>
<span class="t" style="left:570.2px;top:384px;font-size:13.33px;line-height:20px;color:#000;letter-spacing:0.138px;">Vertical Align:</span>
<div style="left:571px;top:405px;width:115px;height:23px;background:#f0f0f0;box-shadow:inset 1px 1px 0 #a0a0a0,inset -1px -1px 0 #fff,inset 2px 2px 0 #696969,inset -2px -2px 0 #e3e3e3;"></div>
<div style="left:668px;top:407px;width:17px;height:20px;background:#f0f0f0;box-shadow:inset 1px 1px 0 #fff,inset -1px -1px 0 #696969,inset 2px 2px 0 #e3e3e3,inset -2px -2px 0 #a0a0a0;"></div>
<svg class="a" style="left:673.0px;top:414.5px" width="7" height="4" viewBox="0 0 7 4"><path d="M0 0h7L3.5 4z" fill="#a0a0a0"/></svg>
<span class="t" style="left:574.6px;top:408px;font-size:13.33px;line-height:20px;color:#6d6d6d;letter-spacing:0.033px;">Centered</span>
<div style="left:700px;top:310px;width:131px;height:121px;border:1px solid #fff;box-sizing:border-box;"></div>
<div style="left:699px;top:309px;width:131px;height:121px;border:1px solid #a0a0a0;box-sizing:border-box;"></div>
<div style="left:706px;top:309px;width:99px;height:2px;background:#f0f0f0;"></div>
<div style="left:707px;top:302px;width:13px;height:13px;background:#fff;box-shadow:inset 1px 1px 0 #a0a0a0,inset -1px -1px 0 #fff,inset 2px 2px 0 #696969,inset -2px -2px 0 #e3e3e3;"></div>
<span class="t" style="left:724.8px;top:300px;font-size:13.33px;line-height:20px;color:#000;letter-spacing:0.139px;">Value Label:</span>
<div style="left:707px;top:324px;width:13px;height:13px;background:#f0f0f0;box-shadow:inset 1px 1px 0 #a0a0a0,inset -1px -1px 0 #fff,inset 2px 2px 0 #696969,inset -2px -2px 0 #e3e3e3;"></div>
<span class="t" style="left:724.8px;top:322px;font-size:13.33px;line-height:20px;color:#a0a0a0;letter-spacing:0.181px;">Reverse Colors</span>
<span class="t" style="left:706.2px;top:338px;font-size:13.33px;line-height:20px;color:#000;letter-spacing:0.040px;">Horizontal Align:</span>
<div style="left:707px;top:357px;width:115px;height:23px;background:#f0f0f0;box-shadow:inset 1px 1px 0 #a0a0a0,inset -1px -1px 0 #fff,inset 2px 2px 0 #696969,inset -2px -2px 0 #e3e3e3;"></div>
<div style="left:804px;top:359px;width:17px;height:20px;background:#f0f0f0;box-shadow:inset 1px 1px 0 #fff,inset -1px -1px 0 #696969,inset 2px 2px 0 #e3e3e3,inset -2px -2px 0 #a0a0a0;"></div>
<svg class="a" style="left:809.0px;top:366.5px" width="7" height="4" viewBox="0 0 7 4"><path d="M0 0h7L3.5 4z" fill="#a0a0a0"/></svg>
<span class="t" style="left:710.6px;top:360px;font-size:13.33px;line-height:20px;color:#6d6d6d;letter-spacing:0.167px;">Right Side Valu</span>
<span class="t" style="left:706.2px;top:384px;font-size:13.33px;line-height:20px;color:#000;letter-spacing:0.138px;">Vertical Align:</span>
<div style="left:707px;top:405px;width:115px;height:23px;background:#f0f0f0;box-shadow:inset 1px 1px 0 #a0a0a0,inset -1px -1px 0 #fff,inset 2px 2px 0 #696969,inset -2px -2px 0 #e3e3e3;"></div>
<div style="left:804px;top:407px;width:17px;height:20px;background:#f0f0f0;box-shadow:inset 1px 1px 0 #fff,inset -1px -1px 0 #696969,inset 2px 2px 0 #e3e3e3,inset -2px -2px 0 #a0a0a0;"></div>
<svg class="a" style="left:809.0px;top:414.5px" width="7" height="4" viewBox="0 0 7 4"><path d="M0 0h7L3.5 4z" fill="#a0a0a0"/></svg>
<span class="t" style="left:710.6px;top:408px;font-size:13.33px;line-height:20px;color:#6d6d6d;letter-spacing:0.033px;">Centered</span>
<div style="left:135px;top:440px;width:13px;height:13px;background:#fff;box-shadow:inset 1px 1px 0 #a0a0a0,inset -1px -1px 0 #fff,inset 2px 2px 0 #696969,inset -2px -2px 0 #e3e3e3;"></div>
<svg class="a" style="left:138px;top:443px" width="7" height="7" viewBox="0 0 7 7"><path d="M0 2v3l2 2 5-5V-1L2 4z" fill="#000" shape-rendering="crispEdges"/></svg>
<span class="t" style="left:152.7px;top:437px;font-size:13.33px;line-height:20px;color:#000;letter-spacing:0.077px;">Display Name and Value in Chart Values Windows</span>
<div style="left:485px;top:440px;width:13px;height:13px;background:#fff;box-shadow:inset 1px 1px 0 #a0a0a0,inset -1px -1px 0 #fff,inset 2px 2px 0 #696969,inset -2px -2px 0 #e3e3e3;"></div>
<svg class="a" style="left:488px;top:443px" width="7" height="7" viewBox="0 0 7 7"><path d="M0 2v3l2 2 5-5V-1L2 4z" fill="#000" shape-rendering="crispEdges"/></svg>
<span class="t" style="left:502.4px;top:437px;font-size:13.33px;line-height:20px;color:#000;letter-spacing:0.100px;">Display Name and Value in Region Data Line</span>
<div style="left:135px;top:460px;width:13px;height:13px;background:#fff;box-shadow:inset 1px 1px 0 #a0a0a0,inset -1px -1px 0 #fff,inset 2px 2px 0 #696969,inset -2px -2px 0 #e3e3e3;"></div>
<svg class="a" style="left:138px;top:463px" width="7" height="7" viewBox="0 0 7 7"><path d="M0 2v3l2 2 5-5V-1L2 4z" fill="#000" shape-rendering="crispEdges"/></svg>
<span class="t" style="left:152.7px;top:456px;font-size:13.33px;line-height:20px;color:#000;letter-spacing:0.115px;">Include in Spreadsheet</span>
<div style="left:133px;top:488px;width:13px;height:13px;background:#fff;box-shadow:inset 1px 1px 0 #a0a0a0,inset -1px -1px 0 #fff,inset 2px 2px 0 #696969,inset -2px -2px 0 #e3e3e3;"></div>
<svg class="a" style="left:136px;top:491px" width="7" height="7" viewBox="0 0 7 7"><path d="M0 2v3l2 2 5-5V-1L2 4z" fill="#000" shape-rendering="crispEdges"/></svg>
<span class="t" style="left:150.4px;top:485px;font-size:13.33px;line-height:20px;color:#000;letter-spacing:0.103px;">Display Study Subgraphs Name and Value - Global</span>
<div style="left:481px;top:488px;width:13px;height:13px;background:#fff;box-shadow:inset 1px 1px 0 #a0a0a0,inset -1px -1px 0 #fff,inset 2px 2px 0 #696969,inset -2px -2px 0 #e3e3e3;"></div>
<span class="t" style="left:498.4px;top:485px;font-size:13.33px;line-height:20px;color:#000;letter-spacing:0.163px;">Use Common Displacement</span>
<div style="left:683px;top:488px;width:13px;height:13px;background:#fff;box-shadow:inset 1px 1px 0 #a0a0a0,inset -1px -1px 0 #fff,inset 2px 2px 0 #696969,inset -2px -2px 0 #e3e3e3;"></div>
<svg class="a" style="left:686px;top:491px" width="7" height="7" viewBox="0 0 7 7"><path d="M0 2v3l2 2 5-5V-1L2 4z" fill="#000" shape-rendering="crispEdges"/></svg>
<span class="t" style="left:700.5px;top:485px;font-size:13.33px;line-height:20px;color:#000;letter-spacing:0.163px;">Display Study Name</span>
<div style="left:133px;top:510px;width:13px;height:13px;background:#fff;box-shadow:inset 1px 1px 0 #a0a0a0,inset -1px -1px 0 #fff,inset 2px 2px 0 #696969,inset -2px -2px 0 #e3e3e3;"></div>
<svg class="a" style="left:136px;top:513px" width="7" height="7" viewBox="0 0 7 7"><path d="M0 2v3l2 2 5-5V-1L2 4z" fill="#000" shape-rendering="crispEdges"/></svg>
<span class="t" style="left:150.4px;top:507px;font-size:13.33px;line-height:20px;color:#000;letter-spacing:0.103px;">Display Input Values</span>
<div style="left:295px;top:510px;width:13px;height:13px;background:#fff;box-shadow:inset 1px 1px 0 #a0a0a0,inset -1px -1px 0 #fff,inset 2px 2px 0 #696969,inset -2px -2px 0 #e3e3e3;"></div>
<span class="t" style="left:312.4px;top:507px;font-size:13.33px;line-height:20px;color:#000;letter-spacing:0.011px;">Resolve Full Names for Reference Inputs</span>
<div style="left:605px;top:510px;width:13px;height:13px;background:#fff;box-shadow:inset 1px 1px 0 #a0a0a0,inset -1px -1px 0 #fff,inset 2px 2px 0 #696969,inset -2px -2px 0 #e3e3e3;"></div>
<span class="t" style="left:622.4px;top:507px;font-size:13.33px;line-height:20px;color:#000;letter-spacing:0.194px;">Display Values When Hidden</span>
<div style="left:133px;top:532px;width:13px;height:13px;background:#fff;box-shadow:inset 1px 1px 0 #a0a0a0,inset -1px -1px 0 #fff,inset 2px 2px 0 #696969,inset -2px -2px 0 #e3e3e3;"></div>
<svg class="a" style="left:136px;top:535px" width="7" height="7" viewBox="0 0 7 7"><path d="M0 2v3l2 2 5-5V-1L2 4z" fill="#000" shape-rendering="crispEdges"/></svg>
<span class="t" style="left:150.4px;top:529px;font-size:13.33px;line-height:20px;color:#000;letter-spacing:0.104px;">Always Show Name and Value Labels When Enabled</span>
<span class="t" style="left:495.2px;top:531px;font-size:13.33px;line-height:20px;color:#000;letter-spacing:0.024px;">Transparency Level for Fill Styles:</span>
<div style="left:717px;top:529px;width:59px;height:23px;background:#fff;box-shadow:inset 1px 1px 0 #a0a0a0,inset -1px -1px 0 #fff,inset 2px 2px 0 #696969,inset -2px -2px 0 #e3e3e3;"></div>
<span class="t" style="left:720.0px;top:531px;font-size:13.33px;line-height:20px;color:#000;">75</span>
<div style="left:113px;top:572px;width:92px;height:28px;background:#f0f0f0;box-shadow:inset 0 0 0 1px #646464,inset 2px 2px 0 #fff,inset -2px -2px 0 #696969,inset 3px 3px 0 #e3e3e3,inset -3px -3px 0 #a0a0a0;"></div>
<span class="t" style="left:149.2px;top:576px;font-size:13.33px;line-height:20px;color:#000;letter-spacing:0.070px;">OK</span>
<div style="left:215px;top:573px;width:92px;height:27px;background:#f0f0f0;box-shadow:inset 1px 1px 0 #fff,inset -1px -1px 0 #696969,inset 2px 2px 0 #e3e3e3,inset -2px -2px 0 #a0a0a0;"></div>
<span class="t" style="left:239.2px;top:576px;font-size:13.33px;line-height:20px;color:#000;letter-spacing:0.318px;">Cancel</span>
<div style="left:317px;top:573px;width:92px;height:27px;background:#f0f0f0;box-shadow:inset 1px 1px 0 #fff,inset -1px -1px 0 #696969,inset 2px 2px 0 #e3e3e3,inset -2px -2px 0 #a0a0a0;"></div>
<span class="t" style="left:344.7px;top:576px;font-size:13.33px;line-height:20px;color:#000;letter-spacing:0.611px;">Apply</span>
<div style="left:419px;top:573px;width:92px;height:27px;background:#f0f0f0;box-shadow:inset 1px 1px 0 #fff,inset -1px -1px 0 #696969,inset 2px 2px 0 #e3e3e3,inset -2px -2px 0 #a0a0a0;"></div>
<span class="t" style="left:449.7px;top:576px;font-size:13.33px;line-height:20px;color:#000;letter-spacing:0.746px;">Help</span>
<div style="left:521px;top:573px;width:100px;height:27px;background:#f0f0f0;box-shadow:inset 1px 1px 0 #fff,inset -1px -1px 0 #696969,inset 2px 2px 0 #e3e3e3,inset -2px -2px 0 #a0a0a0;"></div>
<span class="t" style="left:536.2px;top:576px;font-size:13.33px;line-height:20px;color:#000;letter-spacing:0.247px;">Description</span>
<div style="left:631px;top:573px;width:108px;height:27px;background:#f0f0f0;box-shadow:inset 1px 1px 0 #fff,inset -1px -1px 0 #696969,inset 2px 2px 0 #e3e3e3,inset -2px -2px 0 #a0a0a0;"></div>
<span class="t" style="left:648.2px;top:576px;font-size:13.33px;line-height:20px;color:#000;letter-spacing:0.066px;">Set Defaults</span>
<div style="left:749px;top:573px;width:108px;height:27px;background:#f0f0f0;box-shadow:inset 1px 1px 0 #fff,inset -1px -1px 0 #696969,inset 2px 2px 0 #e3e3e3,inset -2px -2px 0 #a0a0a0;"></div>
<span class="t" style="left:758.2px;top:576px;font-size:13.33px;line-height:20px;color:#000;letter-spacing:0.141px;">Reset Defaults</span>
</body></html>
